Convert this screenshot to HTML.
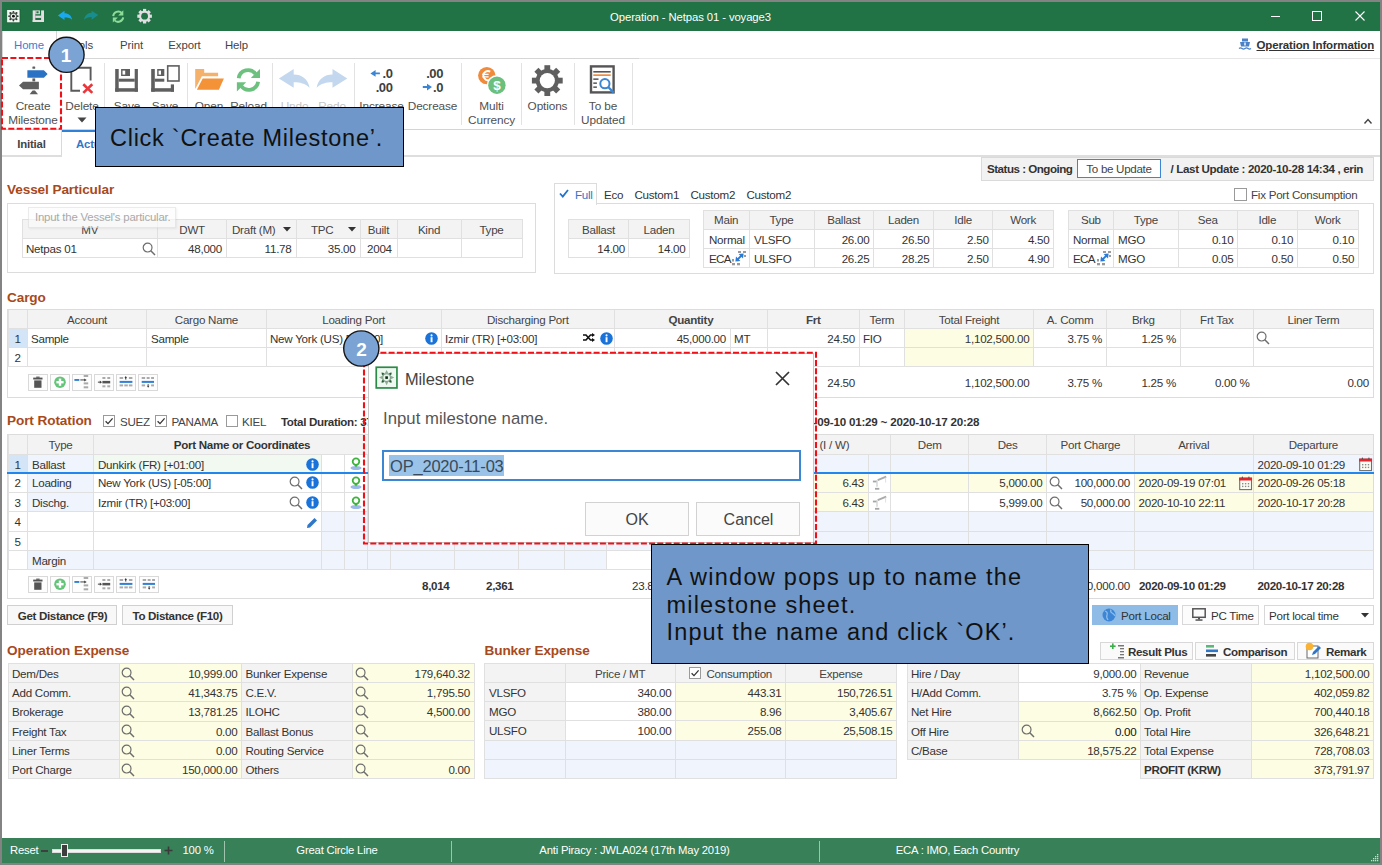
<!DOCTYPE html>
<html><head><meta charset="utf-8"><title>Operation - Netpas 01 - voyage3</title>
<style>
html,body{margin:0;padding:0;}
body{width:1382px;height:865px;position:relative;overflow:hidden;background:#fff;font-family:"Liberation Sans",sans-serif;}
.a{position:absolute;}
.t{position:absolute;white-space:pre;}
svg.a{overflow:visible;}
</style></head><body>

<div class="a" style="left:0px;top:0px;width:1382px;height:865px;background:#838383;"></div>
<div class="a" style="left:2px;top:2px;width:1378px;height:861px;background:#ffffff;"></div>
<div class="a" style="left:2px;top:2px;width:1378px;height:29px;background:#217346;"></div>
<div class="t" style="left:390.5px;top:9.58px;width:600px;font-size:11.3px;line-height:15px;color:#ffffff;text-align:center;letter-spacing:-0.1px;">Operation - Netpas 01 - voyage3</div>
<svg class="a" style="left:6px;top:9px;" width="15" height="15" viewBox="0 0 15 15"><rect x="0.7" y="0.5" width="13.3" height="13.3" fill="#f2f6f3" stroke="#1b5e36" stroke-width="0.8"/><g transform="translate(7.4 7.2)"><circle r="3.2" fill="none" stroke="#5a6a60" stroke-width="1.3"/><circle r="1.4" fill="#111"/><g fill="#2f3f35"><circle cx="0" cy="-4.3" r="0.9"/><circle cx="0" cy="4.3" r="0.9"/><circle cx="-4.3" cy="0" r="0.9"/><circle cx="4.3" cy="0" r="0.9"/><circle cx="3.1" cy="3.1" r="1"/><circle cx="-3.1" cy="3.1" r="1"/><circle cx="3.1" cy="-3.1" r="1"/><circle cx="-3.1" cy="-3.1" r="1"/></g></g></svg>
<svg class="a" style="left:32px;top:10px;" width="13" height="13" viewBox="0 0 13 13"><g fill="#e6dde2"><rect x="0.7" y="0.4" width="2.6" height="11.6"/><rect x="9.1" y="0.4" width="2.9" height="11.6"/><rect x="0.7" y="10" width="11.3" height="2"/><rect x="3.3" y="5.6" width="5.8" height="2.3"/><rect x="3.3" y="0.4" width="4.6" height="3.8"/></g><rect x="4.4" y="1.3" width="2.2" height="2" fill="#217346"/></svg>
<svg class="a" style="left:57px;top:10px;" width="16" height="11" viewBox="0 0 16 11"><path d="M0.9 5.6 L7.5 0.7 L7.5 3.3 C11.5 3.3 14.5 5.6 15.1 9.7 C13 8 11 7.6 7.5 7.6 L7.5 9.9 Z" fill="#1ba8ec"/></svg>
<svg class="a" style="left:83px;top:10px;" width="16" height="11" viewBox="0 0 16 11"><path d="M15.3 5 L8.6 0.7 L8.6 2.7 C4.6 2.7 1.6 5.6 1.1 9.7 C3.2 8 5.2 7 8.6 7 L8.6 9.7 Z" fill="#178d8e"/></svg>
<svg class="a" style="left:111px;top:9px;" width="15" height="15" viewBox="0 0 15 15"><g transform="translate(7.2 7.5)"><path d="M-5 -0.3 A5.1 5.1 0 0 1 3.6 -3.6" fill="none" stroke="#8ddb98" stroke-width="2"/><path d="M5.1 -6.3 L5.1 -0.9 L0 -0.9 Z" fill="#8ddb98"/><path d="M5 0.9 A5.1 5.1 0 0 1 -3.6 3.9" fill="none" stroke="#8ddb98" stroke-width="2"/><path d="M-5.4 0.9 L-0.3 0.9 L-5.4 5.9 Z" fill="#8ddb98"/></g></svg>
<svg class="a" style="left:136px;top:8px;" width="17" height="17" viewBox="0 0 17 17"><g transform="translate(8.6 8.2)"><circle r="5.6" fill="#e2dee2"/><g fill="#e2dee2"><rect x="-1.6" y="-7.3" width="3.2" height="14.6"/><rect x="-1.6" y="-7.3" width="3.2" height="14.6" transform="rotate(45)"/><rect x="-1.6" y="-7.3" width="3.2" height="14.6" transform="rotate(90)"/><rect x="-1.6" y="-7.3" width="3.2" height="14.6" transform="rotate(135)"/></g><circle r="3.4" fill="#217346"/></g></svg>
<div class="a" style="left:1271px;top:16px;width:9px;height:1px;background:#ffffff;"></div>
<div class="a" style="left:1312px;top:11px;width:10px;height:10px;border:1px solid #ffffff;box-sizing:border-box;"></div>
<svg class="a" style="left:1355px;top:11px;" width="10" height="10" viewBox="0 0 10 10"><path d="M0.5 0.5 L9.5 9.5 M9.5 0.5 L0.5 9.5" stroke="#fff" stroke-width="1.1"/></svg>
<div class="a" style="left:2px;top:31px;width:1px;height:27px;background:#d6d6d6;"></div>
<div class="a" style="left:56px;top:31px;width:1px;height:27px;background:#d6d6d6;"></div>
<div class="a" style="left:56px;top:58px;width:583px;height:1px;background:#d6d6d6;"></div>
<div class="a" style="left:639px;top:58px;width:741px;height:1px;background:#e6e6e6;"></div>
<div class="t" style="left:-271.0px;top:38.05px;width:600px;font-size:11.4px;line-height:15px;color:#3b7ed0;text-align:center;letter-spacing:-0.1px;">Home</div>
<div class="t" style="left:-220.0px;top:38.05px;width:600px;font-size:11.4px;line-height:15px;color:#444;text-align:center;letter-spacing:-0.1px;">Tools</div>
<div class="t" style="left:-168.5px;top:38.05px;width:600px;font-size:11.4px;line-height:15px;color:#444;text-align:center;letter-spacing:-0.1px;">Print</div>
<div class="t" style="left:-115.5px;top:38.05px;width:600px;font-size:11.4px;line-height:15px;color:#444;text-align:center;letter-spacing:-0.1px;">Export</div>
<div class="t" style="left:-63.5px;top:38.05px;width:600px;font-size:11.4px;line-height:15px;color:#444;text-align:center;letter-spacing:-0.1px;">Help</div>
<svg class="a" style="left:1239px;top:38px;" width="12" height="13" viewBox="0 0 12 13"><rect x="3" y="0.5" width="6" height="3" fill="#4a82c8"/><path d="M1 4 H11 L10 8.5 H2 Z" fill="#4a82c8"/><rect x="5.3" y="4.5" width="1.4" height="3" fill="#fff"/><path d="M0 10.5 Q1.5 9.2 3 10.5 T6 10.5 T9 10.5 T12 10.5" fill="none" stroke="#4a82c8" stroke-width="1.2"/></svg>
<div class="t" style="left:1256.5px;top:38.02px;width:600px;font-size:11.5px;line-height:15px;color:#333;text-align:left;font-weight:bold;letter-spacing:-0.15px;text-decoration:underline;">Operation Information</div>
<div class="a" style="left:2px;top:129px;width:1378px;height:1px;background:#d4d4d4;"></div>
<div class="a" style="left:104px;top:63px;width:1px;height:62px;background:#e2e2e2;"></div>
<div class="a" style="left:187px;top:63px;width:1px;height:62px;background:#e2e2e2;"></div>
<div class="a" style="left:272px;top:63px;width:1px;height:62px;background:#e2e2e2;"></div>
<div class="a" style="left:354px;top:63px;width:1px;height:62px;background:#e2e2e2;"></div>
<div class="a" style="left:461px;top:63px;width:1px;height:62px;background:#e2e2e2;"></div>
<div class="a" style="left:521px;top:63px;width:1px;height:62px;background:#e2e2e2;"></div>
<div class="a" style="left:574px;top:63px;width:1px;height:62px;background:#e2e2e2;"></div>
<div class="a" style="left:632px;top:63px;width:1px;height:62px;background:#e2e2e2;"></div>
<div class="t" style="left:-267.0px;top:98.91px;width:600px;font-size:11.8px;line-height:15px;color:#505050;text-align:center;letter-spacing:-0.12px;">Create</div>
<div class="t" style="left:-267.0px;top:112.91px;width:600px;font-size:11.8px;line-height:15px;color:#505050;text-align:center;letter-spacing:-0.12px;">Milestone</div>
<div class="t" style="left:-218.0px;top:98.91px;width:600px;font-size:11.8px;line-height:15px;color:#505050;text-align:center;letter-spacing:-0.12px;">Delete</div>
<svg class="a" style="left:77px;top:117px;" width="10" height="6" viewBox="0 0 10 6"><path d="M0.5 0.5 L9.5 0.5 L5 5.5 Z" fill="#444"/></svg>
<div class="t" style="left:-173.0px;top:98.91px;width:600px;font-size:11.8px;line-height:15px;color:#505050;text-align:center;letter-spacing:-0.12px;">Save</div>
<div class="t" style="left:-135.0px;top:98.91px;width:600px;font-size:11.8px;line-height:15px;color:#505050;text-align:center;letter-spacing:-0.12px;">Save</div>
<div class="t" style="left:-91.0px;top:98.91px;width:600px;font-size:11.8px;line-height:15px;color:#505050;text-align:center;letter-spacing:-0.12px;">Open</div>
<div class="t" style="left:-51.5px;top:98.91px;width:600px;font-size:11.8px;line-height:15px;color:#505050;text-align:center;letter-spacing:-0.12px;">Reload</div>
<div class="t" style="left:-5.5px;top:98.91px;width:600px;font-size:11.8px;line-height:15px;color:#c5c5c5;text-align:center;letter-spacing:-0.12px;">Undo</div>
<div class="t" style="left:32.0px;top:98.91px;width:600px;font-size:11.8px;line-height:15px;color:#c5c5c5;text-align:center;letter-spacing:-0.12px;">Redo</div>
<div class="t" style="left:81.5px;top:98.91px;width:600px;font-size:11.8px;line-height:15px;color:#505050;text-align:center;letter-spacing:-0.12px;">Increase</div>
<div class="t" style="left:132.5px;top:98.91px;width:600px;font-size:11.8px;line-height:15px;color:#505050;text-align:center;letter-spacing:-0.12px;">Decrease</div>
<div class="t" style="left:191.5px;top:98.91px;width:600px;font-size:11.8px;line-height:15px;color:#505050;text-align:center;letter-spacing:-0.12px;">Multi</div>
<div class="t" style="left:191.5px;top:112.91px;width:600px;font-size:11.8px;line-height:15px;color:#505050;text-align:center;letter-spacing:-0.12px;">Currency</div>
<div class="t" style="left:247.5px;top:98.91px;width:600px;font-size:11.8px;line-height:15px;color:#505050;text-align:center;letter-spacing:-0.12px;">Options</div>
<div class="t" style="left:303.0px;top:98.91px;width:600px;font-size:11.8px;line-height:15px;color:#505050;text-align:center;letter-spacing:-0.12px;">To be</div>
<div class="t" style="left:303.0px;top:112.91px;width:600px;font-size:11.8px;line-height:15px;color:#505050;text-align:center;letter-spacing:-0.12px;">Updated</div>
<svg class="a" style="left:14px;top:60px;" width="40" height="40" viewBox="0 0 40 40"><g fill="#5f5f5f"><rect x="18.4" y="6.5" width="2.8" height="2.3" rx="0.6"/><rect x="18.4" y="18.4" width="2.8" height="3" /><path d="M18.6 30.5 H21 L24 34.2 H15.6 Z"/><path d="M5 25.5 L9 21.8 H24.9 V29.2 H9 Z"/></g><path d="M13.4 10.3 H29.9 L33.6 14 L29.9 17.7 H13.4 Z" fill="#2a72c4"/></svg>
<svg class="a" style="left:66px;top:62px;" width="32" height="34" viewBox="0 0 32 34"><path d="M5.3 5.8 H24.6 V18.5" fill="none" stroke="#5a5a5a" stroke-width="1.9"/><path d="M5.3 5.2 V28.8 H14" fill="none" stroke="#5a5a5a" stroke-width="1.9"/><path d="M17.3 22.2 L26.3 30.9 M26.3 22.2 L17.3 30.9" stroke="#e8383d" stroke-width="2.7"/></svg>
<svg class="a" style="left:110px;top:60px;" width="75" height="37" viewBox="0 0 75 37"><g fill="#5f5f5f"><rect x="5.2" y="9" width="3.5" height="22.7"/><rect x="24.7" y="9" width="3.2" height="22.7"/><rect x="5.2" y="28.2" width="22.7" height="3.5"/><rect x="8.7" y="18.7" width="16" height="3"/><rect x="11.1" y="9" width="8.9" height="7"/><rect x="41.2" y="9" width="3.6" height="22.7"/><rect x="41.2" y="28.2" width="22.8" height="3.5"/><rect x="60.8" y="24.4" width="3.2" height="7.3"/><rect x="44.8" y="18.7" width="9.5" height="3"/><rect x="47.2" y="9" width="7.1" height="7"/></g><rect x="12.5" y="10.6" width="2.7" height="4" fill="#fff"/><rect x="48.6" y="10.6" width="2.4" height="4" fill="#fff"/><rect x="57.7" y="5.9" width="11.3" height="15.1" fill="none" stroke="#5f5f5f" stroke-width="1.6"/></svg>
<svg class="a" style="left:190px;top:62px;" width="80" height="34" viewBox="0 0 80 34"><path d="M5.2 6.9 H14.2 V10.7 H28.1 V14.2 H11.9 L5.5 26.6 H5.2 Z" fill="#f5b06a"/><path d="M12.7 16.5 H33.9 L28.9 27.8 H6.9 Z" fill="#f39236"/><g fill="none" stroke="#6cc17f" stroke-width="3.8"><path d="M48.7 16.3 A9.4 9.4 0 0 1 65.6 12"/><path d="M68.1 19.8 A9.4 9.4 0 0 1 51.2 24"/></g><g fill="#6cc17f"><path d="M70 6.9 L70 15.9 L60.8 15.9 Z"/><path d="M46.9 20.3 L56.2 20.3 L46.9 29.5 Z"/></g></svg>
<svg class="a" style="left:272px;top:62px;" width="80" height="34" viewBox="0 0 80 34"><g fill="#c3d8ee"><path d="M6.9 16.5 L21.7 6.9 L21.7 12.4 C30 12.4 36 17 37.6 25.8 C33 21.5 28 20.3 21.7 20.3 L21.7 25.8 Z"/><path d="M75.3 16.5 L60.5 6.9 L60.5 12.4 C52.2 12.4 46.2 17 44.6 25.8 C49.2 21.5 54.2 20.3 60.5 20.3 L60.5 25.8 Z"/></g></svg>
<svg class="a" style="left:360px;top:62px;" width="90" height="36" viewBox="0 0 90 36"><g fill="#3a86d4"><path d="M10.4 11.4 L15.6 8.1 L15.6 10.5 H19.9 V12.3 H15.6 L15.6 14.8 Z"/><path d="M72 25 L67 21.8 L67 24.1 H62.8 V25.9 H67 L67 28.4 Z"/></g></svg>
<div class="t" style="left:-207.5px;top:65.30px;width:600px;font-size:13px;line-height:17px;color:#404040;text-align:right;font-weight:bold;letter-spacing:-0.4px;">.0</div>
<div class="t" style="left:-207.5px;top:79.00px;width:600px;font-size:13px;line-height:17px;color:#404040;text-align:right;font-weight:bold;letter-spacing:-0.4px;">.00</div>
<div class="t" style="left:-157.0px;top:65.30px;width:600px;font-size:13px;line-height:17px;color:#404040;text-align:right;font-weight:bold;letter-spacing:-0.4px;">.00</div>
<div class="t" style="left:-157.0px;top:79.00px;width:600px;font-size:13px;line-height:17px;color:#404040;text-align:right;font-weight:bold;letter-spacing:-0.4px;">.0</div>
<svg class="a" style="left:470px;top:60px;" width="160" height="40" viewBox="0 0 160 40"><circle cx="16.8" cy="15.6" r="8.7" fill="#f08b3c"/><path d="M20.2 11.6 A4.6 4.6 0 1 0 20.2 19.6" fill="none" stroke="#fff" stroke-width="1.9"/><path d="M12.3 14.4 H18.6 M12.3 16.8 H18.6" stroke="#fff" stroke-width="1.3"/><circle cx="26.9" cy="25.2" r="10.2" fill="#fff"/><circle cx="26.9" cy="25.2" r="8.7" fill="#6cc07f"/><text x="26.9" y="30.2" font-family="Liberation Sans" font-size="13.5" font-weight="bold" fill="#fff" text-anchor="middle">$</text><g transform="translate(77.3 20.6)"><circle r="11.6" fill="#5f5f5f"/><g fill="#5f5f5f"><rect x="-2.9" y="-15.4" width="5.8" height="30.8"/><rect x="-2.9" y="-15.4" width="5.8" height="30.8" transform="rotate(45)"/><rect x="-2.9" y="-15.4" width="5.8" height="30.8" transform="rotate(90)"/><rect x="-2.9" y="-15.4" width="5.8" height="30.8" transform="rotate(135)"/></g><circle r="7.6" fill="#fff"/></g><rect x="121" y="6.4" width="22.6" height="26" fill="#fff" stroke="#555" stroke-width="2.4"/><rect x="123.3" y="11" width="17.4" height="1.6" fill="#555"/><rect x="123.3" y="14.3" width="17.4" height="1.7" fill="#f08b3c"/><g fill="#555"><rect x="123.3" y="18.4" width="5.2" height="1.5"/><rect x="123.3" y="22.4" width="3.6" height="1.5"/><rect x="123.3" y="26.4" width="3.6" height="1.5"/></g><circle cx="134.9" cy="23.7" r="5.4" fill="#fff"/><circle cx="134.9" cy="23.7" r="4.6" fill="none" stroke="#3c87d4" stroke-width="2"/><path d="M138.2 27 L143.6 32.6" stroke="#3c87d4" stroke-width="2.3"/></svg>
<svg class="a" style="left:1364px;top:118px;" width="8" height="6" viewBox="0 0 8 6"><path d="M0.5 5.5 L4 1.5 L7.5 5.5" fill="none" stroke="#444" stroke-width="1.4"/></svg>
<div class="a" style="left:2px;top:130px;width:60px;height:26px;background:#ffffff;"></div>
<div class="a" style="left:61px;top:130px;width:1px;height:26px;background:#d9d9d9;"></div>
<div class="a" style="left:2px;top:155px;width:60px;height:1px;background:#d9d9d9;"></div>
<div class="t" style="left:-268.5px;top:136.55px;width:600px;font-size:11.4px;line-height:15px;color:#444;text-align:center;font-weight:bold;letter-spacing:-0.2px;">Initial</div>
<div class="a" style="left:62px;top:130px;width:78px;height:2px;background:#2f80d8;"></div>
<div class="t" style="left:76.0px;top:136.55px;width:600px;font-size:11.4px;line-height:15px;color:#2f78c9;text-align:left;font-weight:bold;letter-spacing:-0.2px;">Actual</div>
<div class="a" style="left:140px;top:155px;width:1240px;height:2px;background:#dedede;"></div>
<div class="a" style="left:2px;top:155px;width:60px;height:2px;background:#dedede;"></div>
<div class="a" style="left:981px;top:157px;width:393px;height:24px;background:#f2f2f2;border:1px solid #dadada;box-sizing:border-box;"></div>
<div class="t" style="left:987.0px;top:160.98px;width:600px;font-size:11.6px;line-height:15px;color:#333;text-align:left;font-weight:bold;letter-spacing:-0.5px;">Status : Ongoing</div>
<div class="a" style="left:1077px;top:159px;width:84px;height:19px;background:#ffffff;border:1px solid #3d86d6;box-sizing:border-box;"></div>
<div class="t" style="left:819.0px;top:160.98px;width:600px;font-size:11.6px;line-height:15px;color:#444;text-align:center;letter-spacing:-0.3px;">To be Update</div>
<div class="t" style="left:1170.5px;top:160.98px;width:600px;font-size:11.6px;line-height:15px;color:#333;text-align:left;font-weight:bold;letter-spacing:-0.35px;">/ Last Update : 2020-10-28 14:34 , erin</div>
<div class="t" style="left:7.0px;top:181.29px;width:600px;font-size:13.6px;line-height:18px;color:#a8491b;text-align:left;font-weight:bold;letter-spacing:-0.1px;">Vessel Particular</div>
<div class="a" style="left:7px;top:203px;width:529px;height:70px;border:1px solid #dcdcdc;box-sizing:border-box;"></div>
<div class="a" style="left:22px;top:219px;width:500px;height:19px;background:#f3f3f3;"></div>
<div class="a" style="left:22px;top:219px;width:501px;height:1px;background:#e0e0e0;"></div>
<div class="a" style="left:22px;top:238px;width:501px;height:1px;background:#e0e0e0;"></div>
<div class="a" style="left:22px;top:257px;width:501px;height:1px;background:#e0e0e0;"></div>
<div class="a" style="left:22px;top:219px;width:1px;height:39px;background:#e0e0e0;"></div>
<div class="a" style="left:157px;top:219px;width:1px;height:39px;background:#e0e0e0;"></div>
<div class="a" style="left:226px;top:219px;width:1px;height:39px;background:#e0e0e0;"></div>
<div class="a" style="left:296px;top:219px;width:1px;height:39px;background:#e0e0e0;"></div>
<div class="a" style="left:360px;top:219px;width:1px;height:39px;background:#e0e0e0;"></div>
<div class="a" style="left:397px;top:219px;width:1px;height:39px;background:#e0e0e0;"></div>
<div class="a" style="left:461px;top:219px;width:1px;height:39px;background:#e0e0e0;"></div>
<div class="a" style="left:522px;top:219px;width:1px;height:39px;background:#e0e0e0;"></div>
<div class="t" style="left:-210.2px;top:221.78px;width:600px;font-size:11.6px;line-height:15px;color:#444;text-align:center;letter-spacing:-0.25px;">MV</div>
<div class="t" style="left:-107.9px;top:221.78px;width:600px;font-size:11.6px;line-height:15px;color:#444;text-align:center;letter-spacing:-0.25px;">DWT</div>
<div class="t" style="left:78.5px;top:221.78px;width:600px;font-size:11.6px;line-height:15px;color:#444;text-align:center;letter-spacing:-0.25px;">Built</div>
<div class="t" style="left:129.0px;top:221.78px;width:600px;font-size:11.6px;line-height:15px;color:#444;text-align:center;letter-spacing:-0.25px;">Kind</div>
<div class="t" style="left:191.5px;top:221.78px;width:600px;font-size:11.6px;line-height:15px;color:#444;text-align:center;letter-spacing:-0.25px;">Type</div>
<div class="t" style="left:232.0px;top:221.78px;width:600px;font-size:11.6px;line-height:15px;color:#444;text-align:left;letter-spacing:-0.25px;">Draft (M)</div>
<svg class="a" style="left:283px;top:227px;" width="8" height="5" viewBox="0 0 8 5"><path d="M0 0 H8 L4 4.5 Z" fill="#333"/></svg>
<div class="t" style="left:311.0px;top:221.78px;width:600px;font-size:11.6px;line-height:15px;color:#444;text-align:left;letter-spacing:-0.25px;">TPC</div>
<svg class="a" style="left:348px;top:227px;" width="8" height="5" viewBox="0 0 8 5"><path d="M0 0 H8 L4 4.5 Z" fill="#333"/></svg>
<div class="t" style="left:26.0px;top:240.78px;width:600px;font-size:11.6px;line-height:15px;color:#333;text-align:left;letter-spacing:-0.25px;">Netpas 01</div>
<svg class="a" style="left:142px;top:242px;" width="14" height="14" viewBox="0 0 14 14"><circle cx="5.6" cy="5.6" r="4.4" fill="none" stroke="#6d6d6d" stroke-width="1.2"/><line x1="8.8" y1="8.8" x2="13" y2="13" stroke="#6d6d6d" stroke-width="1.5"/></svg>
<div class="t" style="left:-378.0px;top:240.78px;width:600px;font-size:11.6px;line-height:15px;color:#333;text-align:right;letter-spacing:-0.25px;">48,000</div>
<div class="t" style="left:-308.5px;top:240.78px;width:600px;font-size:11.6px;line-height:15px;color:#333;text-align:right;letter-spacing:-0.25px;">11.78</div>
<div class="t" style="left:-244.5px;top:240.78px;width:600px;font-size:11.6px;line-height:15px;color:#333;text-align:right;letter-spacing:-0.25px;">35.00</div>
<div class="t" style="left:367.0px;top:240.78px;width:600px;font-size:11.6px;line-height:15px;color:#333;text-align:left;letter-spacing:-0.25px;">2004</div>
<div class="a" style="left:28px;top:207px;width:148px;height:21px;background:rgba(252,252,252,0.6);border:1px solid rgba(0,0,0,0.07);box-sizing:border-box;box-shadow:1px 1px 2px rgba(0,0,0,0.06);"></div>
<div class="t" style="left:35.0px;top:209.55px;width:600px;font-size:11.4px;line-height:15px;color:#a9a9a9;text-align:left;letter-spacing:-0.2px;">Input the Vessel&#x27;s particular.</div>
<div class="a" style="left:554px;top:203px;width:820px;height:71px;border:1px solid #dcdcdc;box-sizing:border-box;"></div>
<div class="a" style="left:554px;top:183px;width:43px;height:22px;background:#fff;border:1px solid #dcdcdc;border-bottom:none;box-sizing:border-box;"></div>
<svg class="a" style="left:559px;top:189px;" width="10" height="9" viewBox="0 0 10 9"><path d="M1 4.5 L3.8 7.5 L9 1" fill="none" stroke="#1f72d0" stroke-width="1.8"/></svg>
<div class="t" style="left:575.0px;top:186.98px;width:600px;font-size:11.6px;line-height:15px;color:#2f78c9;text-align:left;letter-spacing:-0.25px;">Full</div>
<div class="t" style="left:604.0px;top:186.98px;width:600px;font-size:11.6px;line-height:15px;color:#333;text-align:left;letter-spacing:-0.25px;">Eco</div>
<div class="t" style="left:634.5px;top:186.98px;width:600px;font-size:11.6px;line-height:15px;color:#333;text-align:left;letter-spacing:-0.25px;">Custom1</div>
<div class="t" style="left:690.5px;top:186.98px;width:600px;font-size:11.6px;line-height:15px;color:#333;text-align:left;letter-spacing:-0.25px;">Custom2</div>
<div class="t" style="left:746.5px;top:186.98px;width:600px;font-size:11.6px;line-height:15px;color:#333;text-align:left;letter-spacing:-0.25px;">Custom2</div>
<svg class="a" style="left:1234px;top:188px;" width="13" height="13" viewBox="0 0 13 13"><rect x="0.5" y="0.5" width="12" height="12" fill="#fff" stroke="#9a9a9a"/></svg>
<div class="t" style="left:1251.0px;top:186.68px;width:600px;font-size:11.6px;line-height:15px;color:#444;text-align:left;letter-spacing:-0.25px;">Fix Port Consumption</div>
<div class="a" style="left:568px;top:219px;width:121px;height:19px;background:#f3f3f3;"></div>
<div class="a" style="left:568px;top:219px;width:122px;height:1px;background:#e0e0e0;"></div>
<div class="a" style="left:568px;top:238px;width:122px;height:1px;background:#e0e0e0;"></div>
<div class="a" style="left:568px;top:257px;width:122px;height:1px;background:#e0e0e0;"></div>
<div class="a" style="left:568px;top:219px;width:1px;height:39px;background:#e0e0e0;"></div>
<div class="a" style="left:628px;top:219px;width:1px;height:39px;background:#e0e0e0;"></div>
<div class="a" style="left:689px;top:219px;width:1px;height:39px;background:#e0e0e0;"></div>
<div class="t" style="left:298.5px;top:221.98px;width:600px;font-size:11.6px;line-height:15px;color:#444;text-align:center;letter-spacing:-0.25px;">Ballast</div>
<div class="t" style="left:359.0px;top:221.98px;width:600px;font-size:11.6px;line-height:15px;color:#444;text-align:center;letter-spacing:-0.25px;">Laden</div>
<div class="t" style="left:25.0px;top:240.98px;width:600px;font-size:11.6px;line-height:15px;color:#333;text-align:right;letter-spacing:-0.25px;">14.00</div>
<div class="t" style="left:85.5px;top:240.98px;width:600px;font-size:11.6px;line-height:15px;color:#333;text-align:right;letter-spacing:-0.25px;">14.00</div>
<div class="a" style="left:703px;top:210px;width:350px;height:19px;background:#f3f3f3;"></div>
<div class="a" style="left:703px;top:210px;width:351px;height:1px;background:#e0e0e0;"></div>
<div class="a" style="left:703px;top:229px;width:351px;height:1px;background:#e0e0e0;"></div>
<div class="a" style="left:703px;top:248px;width:351px;height:1px;background:#e0e0e0;"></div>
<div class="a" style="left:703px;top:267px;width:351px;height:1px;background:#e0e0e0;"></div>
<div class="a" style="left:703px;top:210px;width:1px;height:58px;background:#e0e0e0;"></div>
<div class="a" style="left:749px;top:210px;width:1px;height:58px;background:#e0e0e0;"></div>
<div class="a" style="left:814px;top:210px;width:1px;height:58px;background:#e0e0e0;"></div>
<div class="a" style="left:873px;top:210px;width:1px;height:58px;background:#e0e0e0;"></div>
<div class="a" style="left:933px;top:210px;width:1px;height:58px;background:#e0e0e0;"></div>
<div class="a" style="left:992px;top:210px;width:1px;height:58px;background:#e0e0e0;"></div>
<div class="a" style="left:1053px;top:210px;width:1px;height:58px;background:#e0e0e0;"></div>
<div class="t" style="left:426.2px;top:212.48px;width:600px;font-size:11.6px;line-height:15px;color:#444;text-align:center;letter-spacing:-0.25px;">Main</div>
<div class="t" style="left:481.5px;top:212.48px;width:600px;font-size:11.6px;line-height:15px;color:#444;text-align:center;letter-spacing:-0.25px;">Type</div>
<div class="t" style="left:543.7px;top:212.48px;width:600px;font-size:11.6px;line-height:15px;color:#444;text-align:center;letter-spacing:-0.25px;">Ballast</div>
<div class="t" style="left:603.5px;top:212.48px;width:600px;font-size:11.6px;line-height:15px;color:#444;text-align:center;letter-spacing:-0.25px;">Laden</div>
<div class="t" style="left:663.1px;top:212.48px;width:600px;font-size:11.6px;line-height:15px;color:#444;text-align:center;letter-spacing:-0.25px;">Idle</div>
<div class="t" style="left:723.1px;top:212.48px;width:600px;font-size:11.6px;line-height:15px;color:#444;text-align:center;letter-spacing:-0.25px;">Work</div>
<div class="t" style="left:709.0px;top:231.88px;width:600px;font-size:11.6px;line-height:15px;color:#333;text-align:left;letter-spacing:-0.25px;">Normal</div>
<div class="t" style="left:754.0px;top:231.88px;width:600px;font-size:11.6px;line-height:15px;color:#333;text-align:left;letter-spacing:-0.25px;">VLSFO</div>
<div class="t" style="left:269.4px;top:231.88px;width:600px;font-size:11.6px;line-height:15px;color:#333;text-align:right;letter-spacing:-0.25px;">26.00</div>
<div class="t" style="left:329.5px;top:231.88px;width:600px;font-size:11.6px;line-height:15px;color:#333;text-align:right;letter-spacing:-0.25px;">26.50</div>
<div class="t" style="left:388.7px;top:231.88px;width:600px;font-size:11.6px;line-height:15px;color:#333;text-align:right;letter-spacing:-0.25px;">2.50</div>
<div class="t" style="left:449.5px;top:231.88px;width:600px;font-size:11.6px;line-height:15px;color:#333;text-align:right;letter-spacing:-0.25px;">4.50</div>
<div class="t" style="left:709.0px;top:250.88px;width:600px;font-size:11.6px;line-height:15px;color:#333;text-align:left;letter-spacing:-0.7px;">ECA</div>
<div class="t" style="left:754.0px;top:250.88px;width:600px;font-size:11.6px;line-height:15px;color:#333;text-align:left;letter-spacing:-0.25px;">ULSFO</div>
<div class="t" style="left:269.4px;top:250.88px;width:600px;font-size:11.6px;line-height:15px;color:#333;text-align:right;letter-spacing:-0.25px;">26.25</div>
<div class="t" style="left:329.5px;top:250.88px;width:600px;font-size:11.6px;line-height:15px;color:#333;text-align:right;letter-spacing:-0.25px;">28.25</div>
<div class="t" style="left:388.7px;top:250.88px;width:600px;font-size:11.6px;line-height:15px;color:#333;text-align:right;letter-spacing:-0.25px;">2.50</div>
<div class="t" style="left:449.5px;top:250.88px;width:600px;font-size:11.6px;line-height:15px;color:#333;text-align:right;letter-spacing:-0.25px;">4.90</div>
<svg class="a" style="left:731px;top:250px;" width="16" height="16" viewBox="0 0 16 16"><g fill="#9a9a9a"><rect x="7" y="1" width="3" height="2"/><rect x="12" y="1" width="3" height="2"/><rect x="13" y="5" width="2" height="2"/><rect x="1" y="9" width="2" height="2.5"/><rect x="1" y="13" width="3" height="2.3"/><rect x="6" y="13" width="3" height="2.3"/></g><path d="M5.5 10.5 L11.5 4.5" stroke="#2a7ad6" stroke-width="1.8"/><path d="M12.6 3.4 L7.6 4 L12 8.4 Z" fill="#2a7ad6"/><path d="M4.4 11.6 L9.4 11 L5 6.6 Z" fill="#2a7ad6"/></svg>
<div class="a" style="left:1068px;top:210px;width:290px;height:19px;background:#f3f3f3;"></div>
<div class="a" style="left:1068px;top:210px;width:291px;height:1px;background:#e0e0e0;"></div>
<div class="a" style="left:1068px;top:229px;width:291px;height:1px;background:#e0e0e0;"></div>
<div class="a" style="left:1068px;top:248px;width:291px;height:1px;background:#e0e0e0;"></div>
<div class="a" style="left:1068px;top:267px;width:291px;height:1px;background:#e0e0e0;"></div>
<div class="a" style="left:1068px;top:210px;width:1px;height:58px;background:#e0e0e0;"></div>
<div class="a" style="left:1113px;top:210px;width:1px;height:58px;background:#e0e0e0;"></div>
<div class="a" style="left:1178px;top:210px;width:1px;height:58px;background:#e0e0e0;"></div>
<div class="a" style="left:1237px;top:210px;width:1px;height:58px;background:#e0e0e0;"></div>
<div class="a" style="left:1297px;top:210px;width:1px;height:58px;background:#e0e0e0;"></div>
<div class="a" style="left:1358px;top:210px;width:1px;height:58px;background:#e0e0e0;"></div>
<div class="t" style="left:790.9px;top:212.48px;width:600px;font-size:11.6px;line-height:15px;color:#444;text-align:center;letter-spacing:-0.25px;">Sub</div>
<div class="t" style="left:845.8px;top:212.48px;width:600px;font-size:11.6px;line-height:15px;color:#444;text-align:center;letter-spacing:-0.25px;">Type</div>
<div class="t" style="left:907.8px;top:212.48px;width:600px;font-size:11.6px;line-height:15px;color:#444;text-align:center;letter-spacing:-0.25px;">Sea</div>
<div class="t" style="left:967.3px;top:212.48px;width:600px;font-size:11.6px;line-height:15px;color:#444;text-align:center;letter-spacing:-0.25px;">Idle</div>
<div class="t" style="left:1027.7px;top:212.48px;width:600px;font-size:11.6px;line-height:15px;color:#444;text-align:center;letter-spacing:-0.25px;">Work</div>
<div class="t" style="left:1073.0px;top:231.88px;width:600px;font-size:11.6px;line-height:15px;color:#333;text-align:left;letter-spacing:-0.25px;">Normal</div>
<div class="t" style="left:1118.0px;top:231.88px;width:600px;font-size:11.6px;line-height:15px;color:#333;text-align:left;letter-spacing:-0.25px;">MGO</div>
<div class="t" style="left:633.5px;top:231.88px;width:600px;font-size:11.6px;line-height:15px;color:#333;text-align:right;letter-spacing:-0.25px;">0.10</div>
<div class="t" style="left:693.2px;top:231.88px;width:600px;font-size:11.6px;line-height:15px;color:#333;text-align:right;letter-spacing:-0.25px;">0.10</div>
<div class="t" style="left:754.2px;top:231.88px;width:600px;font-size:11.6px;line-height:15px;color:#333;text-align:right;letter-spacing:-0.25px;">0.10</div>
<div class="t" style="left:1073.0px;top:250.88px;width:600px;font-size:11.6px;line-height:15px;color:#333;text-align:left;letter-spacing:-0.7px;">ECA</div>
<div class="t" style="left:1118.0px;top:250.88px;width:600px;font-size:11.6px;line-height:15px;color:#333;text-align:left;letter-spacing:-0.25px;">MGO</div>
<div class="t" style="left:633.5px;top:250.88px;width:600px;font-size:11.6px;line-height:15px;color:#333;text-align:right;letter-spacing:-0.25px;">0.05</div>
<div class="t" style="left:693.2px;top:250.88px;width:600px;font-size:11.6px;line-height:15px;color:#333;text-align:right;letter-spacing:-0.25px;">0.50</div>
<div class="t" style="left:754.2px;top:250.88px;width:600px;font-size:11.6px;line-height:15px;color:#333;text-align:right;letter-spacing:-0.25px;">0.50</div>
<svg class="a" style="left:1095.5px;top:250px;" width="16" height="16" viewBox="0 0 16 16"><g fill="#9a9a9a"><rect x="7" y="1" width="3" height="2"/><rect x="12" y="1" width="3" height="2"/><rect x="13" y="5" width="2" height="2"/><rect x="1" y="9" width="2" height="2.5"/><rect x="1" y="13" width="3" height="2.3"/><rect x="6" y="13" width="3" height="2.3"/></g><path d="M5.5 10.5 L11.5 4.5" stroke="#2a7ad6" stroke-width="1.8"/><path d="M12.6 3.4 L7.6 4 L12 8.4 Z" fill="#2a7ad6"/><path d="M4.4 11.6 L9.4 11 L5 6.6 Z" fill="#2a7ad6"/></svg>
<div class="t" style="left:7.0px;top:288.79px;width:600px;font-size:13.6px;line-height:18px;color:#a8491b;text-align:left;font-weight:bold;letter-spacing:-0.1px;">Cargo</div>
<div class="a" style="left:8px;top:309px;width:1365px;height:19px;background:#f3f3f3;"></div>
<div class="a" style="left:8px;top:328px;width:19px;height:19px;background:#d3e5f6;"></div>
<div class="a" style="left:904px;top:328px;width:129px;height:38px;background:#fdfde4;"></div>
<div class="a" style="left:8px;top:309px;width:1366px;height:1px;background:#e0e0e0;"></div>
<div class="a" style="left:8px;top:328px;width:1366px;height:1px;background:#e0e0e0;"></div>
<div class="a" style="left:8px;top:347px;width:1366px;height:1px;background:#e0e0e0;"></div>
<div class="a" style="left:8px;top:366px;width:1366px;height:1px;background:#e0e0e0;"></div>
<div class="a" style="left:8px;top:309px;width:1px;height:58px;background:#e0e0e0;"></div>
<div class="a" style="left:27px;top:309px;width:1px;height:58px;background:#e0e0e0;"></div>
<div class="a" style="left:146px;top:309px;width:1px;height:58px;background:#e0e0e0;"></div>
<div class="a" style="left:266px;top:309px;width:1px;height:58px;background:#e0e0e0;"></div>
<div class="a" style="left:441px;top:309px;width:1px;height:58px;background:#e0e0e0;"></div>
<div class="a" style="left:614px;top:309px;width:1px;height:58px;background:#e0e0e0;"></div>
<div class="a" style="left:767px;top:309px;width:1px;height:58px;background:#e0e0e0;"></div>
<div class="a" style="left:859px;top:309px;width:1px;height:58px;background:#e0e0e0;"></div>
<div class="a" style="left:904px;top:309px;width:1px;height:58px;background:#e0e0e0;"></div>
<div class="a" style="left:1033px;top:309px;width:1px;height:58px;background:#e0e0e0;"></div>
<div class="a" style="left:1106px;top:309px;width:1px;height:58px;background:#e0e0e0;"></div>
<div class="a" style="left:1180px;top:309px;width:1px;height:58px;background:#e0e0e0;"></div>
<div class="a" style="left:1253px;top:309px;width:1px;height:58px;background:#e0e0e0;"></div>
<div class="a" style="left:1373px;top:309px;width:1px;height:58px;background:#e0e0e0;"></div>
<div class="a" style="left:730px;top:328px;width:1px;height:39px;background:#e0e0e0;"></div>
<div class="a" style="left:7px;top:309px;width:1367px;height:89px;border:1px solid #dcdcdc;box-sizing:border-box;"></div>
<div class="t" style="left:-213.0px;top:311.78px;width:600px;font-size:11.6px;line-height:15px;color:#444;text-align:center;letter-spacing:-0.25px;">Account</div>
<div class="t" style="left:-93.6px;top:311.78px;width:600px;font-size:11.6px;line-height:15px;color:#444;text-align:center;letter-spacing:-0.25px;">Cargo Name</div>
<div class="t" style="left:53.6px;top:311.78px;width:600px;font-size:11.6px;line-height:15px;color:#444;text-align:center;letter-spacing:-0.25px;">Loading Port</div>
<div class="t" style="left:227.8px;top:311.78px;width:600px;font-size:11.6px;line-height:15px;color:#444;text-align:center;letter-spacing:-0.25px;">Discharging Port</div>
<div class="t" style="left:390.9px;top:311.78px;width:600px;font-size:11.6px;line-height:15px;color:#444;text-align:center;font-weight:bold;letter-spacing:-0.25px;">Quantity</div>
<div class="t" style="left:513.3px;top:311.78px;width:600px;font-size:11.6px;line-height:15px;color:#444;text-align:center;font-weight:bold;letter-spacing:-0.25px;">Frt</div>
<div class="t" style="left:581.9px;top:311.78px;width:600px;font-size:11.6px;line-height:15px;color:#444;text-align:center;letter-spacing:-0.25px;">Term</div>
<div class="t" style="left:669.0px;top:311.78px;width:600px;font-size:11.6px;line-height:15px;color:#444;text-align:center;letter-spacing:-0.25px;">Total Freight</div>
<div class="t" style="left:770.1px;top:311.78px;width:600px;font-size:11.6px;line-height:15px;color:#444;text-align:center;letter-spacing:-0.25px;">A. Comm</div>
<div class="t" style="left:843.3px;top:311.78px;width:600px;font-size:11.6px;line-height:15px;color:#444;text-align:center;letter-spacing:-0.25px;">Brkg</div>
<div class="t" style="left:916.8px;top:311.78px;width:600px;font-size:11.6px;line-height:15px;color:#444;text-align:center;letter-spacing:-0.25px;">Frt Tax</div>
<div class="t" style="left:1013.5px;top:311.78px;width:600px;font-size:11.6px;line-height:15px;color:#444;text-align:center;letter-spacing:-0.25px;">Liner Term</div>
<div class="t" style="left:-282.5px;top:330.98px;width:600px;font-size:11.6px;line-height:15px;color:#333;text-align:center;letter-spacing:-0.25px;">1</div>
<div class="t" style="left:-282.5px;top:350.08px;width:600px;font-size:11.6px;line-height:15px;color:#333;text-align:center;letter-spacing:-0.25px;">2</div>
<div class="t" style="left:31.0px;top:330.98px;width:600px;font-size:11.6px;line-height:15px;color:#333;text-align:left;letter-spacing:-0.25px;">Sample</div>
<div class="t" style="left:151.0px;top:330.98px;width:600px;font-size:11.6px;line-height:15px;color:#333;text-align:left;letter-spacing:-0.25px;">Sample</div>
<div class="t" style="left:270.0px;top:330.98px;width:600px;font-size:11.6px;line-height:15px;color:#333;text-align:left;letter-spacing:-0.25px;">New York (US) [-05:00]</div>
<svg class="a" style="left:425px;top:331.9px;" width="13" height="13" viewBox="0 0 13 13"><circle cx="6.5" cy="6.5" r="6.3" fill="#1a73d9"/><rect x="5.6" y="5.2" width="1.9" height="5" fill="#fff"/><circle cx="6.55" cy="3.4" r="1.05" fill="#fff"/></svg>
<div class="t" style="left:445.0px;top:330.98px;width:600px;font-size:11.6px;line-height:15px;color:#333;text-align:left;letter-spacing:-0.25px;">Izmir (TR) [+03:00]</div>
<svg class="a" style="left:583px;top:333.4px;" width="12" height="9" viewBox="0 0 12 9"><path d="M0 2 H3 L7.5 7 H10" fill="none" stroke="#111" stroke-width="1.6"/><path d="M0 7 H3 L7.5 2 H10" fill="none" stroke="#111" stroke-width="1.6"/><path d="M9 0 L12 2 L9 4 Z M9 5 L12 7 L9 9 Z" fill="#111"/></svg>
<svg class="a" style="left:599.5px;top:331.9px;" width="13" height="13" viewBox="0 0 13 13"><circle cx="6.5" cy="6.5" r="6.3" fill="#1a73d9"/><rect x="5.6" y="5.2" width="1.9" height="5" fill="#fff"/><circle cx="6.55" cy="3.4" r="1.05" fill="#fff"/></svg>
<div class="t" style="left:126.0px;top:330.98px;width:600px;font-size:11.6px;line-height:15px;color:#333;text-align:right;letter-spacing:-0.25px;">45,000.00</div>
<div class="t" style="left:734.0px;top:330.98px;width:600px;font-size:11.6px;line-height:15px;color:#333;text-align:left;letter-spacing:-0.25px;">MT</div>
<div class="t" style="left:255.0px;top:330.98px;width:600px;font-size:11.6px;line-height:15px;color:#333;text-align:right;letter-spacing:-0.25px;">24.50</div>
<div class="t" style="left:863.0px;top:330.98px;width:600px;font-size:11.6px;line-height:15px;color:#333;text-align:left;letter-spacing:-0.25px;">FIO</div>
<div class="t" style="left:429.5px;top:330.98px;width:600px;font-size:11.6px;line-height:15px;color:#333;text-align:right;letter-spacing:-0.25px;">1,102,500.00</div>
<div class="t" style="left:502.0px;top:330.98px;width:600px;font-size:11.6px;line-height:15px;color:#333;text-align:right;letter-spacing:-0.25px;">3.75 %</div>
<div class="t" style="left:576.0px;top:330.98px;width:600px;font-size:11.6px;line-height:15px;color:#333;text-align:right;letter-spacing:-0.25px;">1.25 %</div>
<svg class="a" style="left:1256px;top:331.4px;" width="14" height="14" viewBox="0 0 14 14"><circle cx="5.6" cy="5.6" r="4.4" fill="none" stroke="#6d6d6d" stroke-width="1.2"/><line x1="8.8" y1="8.8" x2="13" y2="13" stroke="#6d6d6d" stroke-width="1.5"/></svg>
<div class="a" style="left:28px;top:374px;width:20px;height:17px;box-sizing:border-box;border:1px solid #d9d9d9;background:#fdfdfd"></div>
<svg class="a" style="left:28px;top:374px;" width="20" height="17" viewBox="0 0 20 17"><g fill="#555"><rect x="6.2" y="6.4" width="7.3" height="7.4"/><rect x="5.2" y="3.6" width="9.3" height="1.9"/><rect x="8.2" y="2.6" width="3.4" height="1.2"/></g></svg>
<div class="a" style="left:50px;top:374px;width:20px;height:17px;box-sizing:border-box;border:1px solid #d9d9d9;background:#fdfdfd"></div>
<svg class="a" style="left:50px;top:374px;" width="20" height="17" viewBox="0 0 20 17"><circle cx="10" cy="8.2" r="5.8" fill="#66c47a"/><rect x="8.8" y="4.6" width="2.4" height="7.2" fill="#fff"/><rect x="6.4" y="7" width="7.2" height="2.4" fill="#fff"/></svg>
<div class="a" style="left:72px;top:374px;width:20px;height:17px;box-sizing:border-box;border:1px solid #d9d9d9;background:#fdfdfd"></div>
<svg class="a" style="left:72px;top:374px;" width="20" height="17" viewBox="0 0 20 17"><rect x="2.4" y="5" width="4.9" height="1.9" fill="#2f80d6"/><path d="M8.3 5.95 H13" stroke="#444" stroke-width="1"/><path d="M12.2 4.4 L14.7 5.95 L12.2 7.5 Z" fill="#444"/><g fill="#aaa"><rect x="11.7" y="1" width="4.5" height="2"/><rect x="11.7" y="8.4" width="4.5" height="2"/><rect x="11.7" y="12.3" width="4.5" height="2"/></g></svg>
<div class="a" style="left:94px;top:374px;width:20px;height:17px;box-sizing:border-box;border:1px solid #d9d9d9;background:#fdfdfd"></div>
<svg class="a" style="left:94px;top:374px;" width="20" height="17" viewBox="0 0 20 17"><path d="M3.9 8.15 H6.5" stroke="#444" stroke-width="1"/><path d="M5.8 6.6 L8 8.15 L5.8 9.7 Z" fill="#444"/><rect x="8.4" y="6.9" width="7.8" height="2.5" fill="#555"/><g fill="#aaa"><rect x="8.4" y="3" width="3" height="2"/><rect x="13.3" y="3" width="2.9" height="2"/><rect x="8.4" y="11.3" width="3" height="2"/><rect x="13.3" y="11.3" width="2.9" height="2"/></g></svg>
<div class="a" style="left:116px;top:374px;width:20px;height:17px;box-sizing:border-box;border:1px solid #d9d9d9;background:#fdfdfd"></div>
<svg class="a" style="left:116px;top:374px;" width="20" height="17" viewBox="0 0 20 17"><rect x="3.6" y="6.9" width="12.8" height="2" fill="#2f80d6"/><g fill="#aaa"><rect x="3.6" y="3" width="3.5" height="2"/><rect x="12.9" y="3" width="3.5" height="2"/><rect x="3.6" y="10.4" width="3.5" height="2"/><rect x="8.3" y="10.4" width="3.5" height="2"/><rect x="12.9" y="10.4" width="3.5" height="2"/></g><path d="M8.5 4 L9.75 2 L11 4 Z M9.2 3.8 H10.3 V5.5 H9.2 Z" fill="#333"/></svg>
<div class="a" style="left:138px;top:374px;width:20px;height:17px;box-sizing:border-box;border:1px solid #d9d9d9;background:#fdfdfd"></div>
<svg class="a" style="left:138px;top:374px;" width="20" height="17" viewBox="0 0 20 17"><rect x="3.7" y="6.9" width="12.3" height="2" fill="#2f80d6"/><g fill="#aaa"><rect x="3.7" y="3" width="3.4" height="2"/><rect x="8.7" y="3" width="2.9" height="2"/><rect x="13.1" y="3" width="2.9" height="2"/><rect x="3.7" y="10.4" width="3.4" height="2"/><rect x="13.1" y="10.4" width="2.9" height="2"/></g><path d="M8.9 11.8 L10.15 13.8 L11.4 11.8 Z M9.6 10.2 H10.7 V12 H9.6 Z" fill="#333"/></svg>
<div class="t" style="left:255.0px;top:374.98px;width:600px;font-size:11.6px;line-height:15px;color:#333;text-align:right;letter-spacing:-0.25px;">24.50</div>
<div class="t" style="left:429.5px;top:374.98px;width:600px;font-size:11.6px;line-height:15px;color:#333;text-align:right;letter-spacing:-0.25px;">1,102,500.00</div>
<div class="t" style="left:502.0px;top:374.98px;width:600px;font-size:11.6px;line-height:15px;color:#333;text-align:right;letter-spacing:-0.25px;">3.75 %</div>
<div class="t" style="left:576.0px;top:374.98px;width:600px;font-size:11.6px;line-height:15px;color:#333;text-align:right;letter-spacing:-0.25px;">1.25 %</div>
<div class="t" style="left:649.5px;top:374.98px;width:600px;font-size:11.6px;line-height:15px;color:#333;text-align:right;letter-spacing:-0.25px;">0.00 %</div>
<div class="t" style="left:769.0px;top:374.98px;width:600px;font-size:11.6px;line-height:15px;color:#333;text-align:right;letter-spacing:-0.25px;">0.00</div>
<div class="t" style="left:7.0px;top:412.29px;width:600px;font-size:13.6px;line-height:18px;color:#a8491b;text-align:left;font-weight:bold;letter-spacing:-0.1px;">Port Rotation</div>
<svg class="a" style="left:103px;top:415px;" width="12" height="12" viewBox="0 0 12 12"><rect x="0.5" y="0.5" width="11" height="11" fill="#fff" stroke="#9a9a9a"/><path d="M2.6 6.2 L5 8.6 L9.6 3.4" fill="none" stroke="#333" stroke-width="1.3"/></svg>
<div class="t" style="left:120.0px;top:414.48px;width:600px;font-size:11.6px;line-height:15px;color:#444;text-align:left;letter-spacing:-0.25px;">SUEZ</div>
<svg class="a" style="left:155px;top:415px;" width="12" height="12" viewBox="0 0 12 12"><rect x="0.5" y="0.5" width="11" height="11" fill="#fff" stroke="#9a9a9a"/><path d="M2.6 6.2 L5 8.6 L9.6 3.4" fill="none" stroke="#333" stroke-width="1.3"/></svg>
<div class="t" style="left:171.5px;top:414.48px;width:600px;font-size:11.6px;line-height:15px;color:#444;text-align:left;letter-spacing:-0.25px;">PANAMA</div>
<svg class="a" style="left:225.5px;top:415px;" width="12" height="12" viewBox="0 0 12 12"><rect x="0.5" y="0.5" width="11" height="11" fill="#fff" stroke="#9a9a9a"/></svg>
<div class="t" style="left:242.0px;top:414.48px;width:600px;font-size:11.6px;line-height:15px;color:#444;text-align:left;letter-spacing:-0.25px;">KIEL</div>
<div class="t" style="left:281.0px;top:414.48px;width:600px;font-size:11.6px;line-height:15px;color:#333;text-align:left;font-weight:bold;letter-spacing:-0.35px;">Total Duration: 37.8 Days</div>
<div class="t" style="left:379.2px;top:414.48px;width:600px;font-size:11.6px;line-height:15px;color:#333;text-align:right;font-weight:bold;letter-spacing:-0.2px;">( 2020-09-10 01:29 ~ 2020-10-17 20:28</div>
<div class="a" style="left:8px;top:434px;width:1365px;height:20px;background:#f3f3f3;"></div>
<div class="a" style="left:8px;top:454px;width:19px;height:18px;background:#d3e5f6;"></div>
<div class="a" style="left:27px;top:454px;width:66px;height:57px;background:#f0f4fc;"></div>
<div class="a" style="left:27px;top:550px;width:1346px;height:19px;background:#f0f4fc;"></div>
<div class="a" style="left:606px;top:550px;width:94px;height:19px;background:#ffffff;"></div>
<div class="a" style="left:93px;top:454px;width:228px;height:18px;background:#f2f9f1;"></div>
<div class="a" style="left:321px;top:454px;width:1052px;height:18px;background:#f0f4fc;"></div>
<div class="a" style="left:321px;top:511px;width:1052px;height:39px;background:#f0f4fc;"></div>
<div class="a" style="left:321px;top:454px;width:0px;height:18px;background:#f0f4fc;"></div>
<div class="a" style="left:790px;top:472px;width:78px;height:39px;background:#fdfde4;"></div>
<div class="a" style="left:890px;top:472px;width:78px;height:20px;background:#fdfde4;"></div>
<div class="a" style="left:968px;top:472px;width:78px;height:20px;background:#fdfde4;"></div>
<div class="a" style="left:1134px;top:472px;width:239px;height:39px;background:#fdfde4;"></div>
<div class="a" style="left:321px;top:454px;width:46px;height:18px;background:#ffffff;"></div>
<div class="a" style="left:367px;top:454px;width:423px;height:18px;background:#f0f4fc;"></div>
<div class="a" style="left:8px;top:434px;width:1366px;height:1px;background:#e0e0e0;"></div>
<div class="a" style="left:8px;top:454px;width:1366px;height:1px;background:#e0e0e0;"></div>
<div class="a" style="left:8px;top:472px;width:1366px;height:1px;background:#e0e0e0;"></div>
<div class="a" style="left:8px;top:492px;width:1366px;height:1px;background:#e0e0e0;"></div>
<div class="a" style="left:8px;top:511px;width:1366px;height:1px;background:#e0e0e0;"></div>
<div class="a" style="left:8px;top:531px;width:1366px;height:1px;background:#e0e0e0;"></div>
<div class="a" style="left:8px;top:550px;width:1366px;height:1px;background:#e0e0e0;"></div>
<div class="a" style="left:8px;top:569px;width:1366px;height:1px;background:#e0e0e0;"></div>
<div class="a" style="left:8px;top:434px;width:1px;height:136px;background:#e0e0e0;"></div>
<div class="a" style="left:27px;top:434px;width:1px;height:136px;background:#e0e0e0;"></div>
<div class="a" style="left:93px;top:434px;width:1px;height:136px;background:#e0e0e0;"></div>
<div class="a" style="left:321px;top:434px;width:1px;height:136px;background:#e0e0e0;"></div>
<div class="a" style="left:344px;top:434px;width:1px;height:136px;background:#e0e0e0;"></div>
<div class="a" style="left:367px;top:434px;width:1px;height:136px;background:#e0e0e0;"></div>
<div class="a" style="left:390px;top:434px;width:1px;height:136px;background:#e0e0e0;"></div>
<div class="a" style="left:454px;top:434px;width:1px;height:136px;background:#e0e0e0;"></div>
<div class="a" style="left:518px;top:434px;width:1px;height:136px;background:#e0e0e0;"></div>
<div class="a" style="left:564px;top:434px;width:1px;height:136px;background:#e0e0e0;"></div>
<div class="a" style="left:606px;top:434px;width:1px;height:136px;background:#e0e0e0;"></div>
<div class="a" style="left:680px;top:434px;width:1px;height:136px;background:#e0e0e0;"></div>
<div class="a" style="left:740px;top:434px;width:1px;height:136px;background:#e0e0e0;"></div>
<div class="a" style="left:790px;top:434px;width:1px;height:136px;background:#e0e0e0;"></div>
<div class="a" style="left:868px;top:434px;width:1px;height:136px;background:#e0e0e0;"></div>
<div class="a" style="left:890px;top:434px;width:1px;height:136px;background:#e0e0e0;"></div>
<div class="a" style="left:968px;top:434px;width:1px;height:136px;background:#e0e0e0;"></div>
<div class="a" style="left:1046px;top:434px;width:1px;height:136px;background:#e0e0e0;"></div>
<div class="a" style="left:1134px;top:434px;width:1px;height:136px;background:#e0e0e0;"></div>
<div class="a" style="left:1253px;top:434px;width:1px;height:136px;background:#e0e0e0;"></div>
<div class="a" style="left:1373px;top:434px;width:1px;height:136px;background:#e0e0e0;"></div>
<div class="a" style="left:7px;top:434px;width:1367px;height:165px;border:1px solid #dcdcdc;box-sizing:border-box;"></div>
<div class="a" style="left:321px;top:435px;width:69px;height:19px;background:#f3f3f3;"></div>
<div class="a" style="left:791px;top:435px;width:99px;height:19px;background:#f3f3f3;"></div>
<div class="a" style="left:7px;top:472px;width:1367px;height:2px;background:#2186ee;"></div>
<div class="t" style="left:-239.5px;top:436.78px;width:600px;font-size:11.6px;line-height:15px;color:#444;text-align:center;letter-spacing:-0.25px;">Type</div>
<div class="t" style="left:-58.0px;top:436.78px;width:600px;font-size:11.6px;line-height:15px;color:#333;text-align:center;font-weight:bold;letter-spacing:-0.3px;">Port Name or Coordinates</div>
<div class="t" style="left:819.5px;top:436.78px;width:600px;font-size:11.6px;line-height:15px;color:#444;text-align:left;letter-spacing:-0.25px;">(I / W)</div>
<div class="t" style="left:629.7px;top:436.78px;width:600px;font-size:11.6px;line-height:15px;color:#444;text-align:center;letter-spacing:-0.25px;">Dem</div>
<div class="t" style="left:707.7px;top:436.78px;width:600px;font-size:11.6px;line-height:15px;color:#444;text-align:center;letter-spacing:-0.25px;">Des</div>
<div class="t" style="left:790.4px;top:436.78px;width:600px;font-size:11.6px;line-height:15px;color:#444;text-align:center;letter-spacing:-0.25px;">Port Charge</div>
<div class="t" style="left:893.7px;top:436.78px;width:600px;font-size:11.6px;line-height:15px;color:#444;text-align:center;letter-spacing:-0.25px;">Arrival</div>
<div class="t" style="left:1013.4px;top:436.78px;width:600px;font-size:11.6px;line-height:15px;color:#444;text-align:center;letter-spacing:-0.25px;">Departure</div>
<div class="t" style="left:-282.5px;top:456.58px;width:600px;font-size:11.6px;line-height:15px;color:#333;text-align:center;letter-spacing:-0.25px;">1</div>
<div class="t" style="left:32.0px;top:456.58px;width:600px;font-size:11.6px;line-height:15px;color:#333;text-align:left;letter-spacing:-0.25px;">Ballast</div>
<div class="t" style="left:98.0px;top:456.58px;width:600px;font-size:11.6px;line-height:15px;color:#333;text-align:left;letter-spacing:-0.25px;">Dunkirk (FR) [+01:00]</div>
<div class="t" style="left:-282.5px;top:475.18px;width:600px;font-size:11.6px;line-height:15px;color:#333;text-align:center;letter-spacing:-0.25px;">2</div>
<div class="t" style="left:32.0px;top:475.18px;width:600px;font-size:11.6px;line-height:15px;color:#333;text-align:left;letter-spacing:-0.25px;">Loading</div>
<div class="t" style="left:98.0px;top:475.18px;width:600px;font-size:11.6px;line-height:15px;color:#333;text-align:left;letter-spacing:-0.25px;">New York (US) [-05:00]</div>
<div class="t" style="left:-282.5px;top:495.08px;width:600px;font-size:11.6px;line-height:15px;color:#333;text-align:center;letter-spacing:-0.25px;">3</div>
<div class="t" style="left:32.0px;top:495.08px;width:600px;font-size:11.6px;line-height:15px;color:#333;text-align:left;letter-spacing:-0.25px;">Dischg.</div>
<div class="t" style="left:98.0px;top:495.08px;width:600px;font-size:11.6px;line-height:15px;color:#333;text-align:left;letter-spacing:-0.25px;">Izmir (TR) [+03:00]</div>
<div class="t" style="left:-282.5px;top:514.18px;width:600px;font-size:11.6px;line-height:15px;color:#333;text-align:center;letter-spacing:-0.25px;">4</div>
<div class="t" style="left:-282.5px;top:533.58px;width:600px;font-size:11.6px;line-height:15px;color:#333;text-align:center;letter-spacing:-0.25px;">5</div>
<div class="t" style="left:32.0px;top:553.08px;width:600px;font-size:11.6px;line-height:15px;color:#333;text-align:left;letter-spacing:-0.25px;">Margin</div>
<svg class="a" style="left:306px;top:457.5px;" width="13" height="13" viewBox="0 0 13 13"><circle cx="6.5" cy="6.5" r="6.3" fill="#1a73d9"/><rect x="5.6" y="5.2" width="1.9" height="5" fill="#fff"/><circle cx="6.55" cy="3.4" r="1.05" fill="#fff"/></svg>
<svg class="a" style="left:289px;top:475.6px;" width="14" height="14" viewBox="0 0 14 14"><circle cx="5.6" cy="5.6" r="4.4" fill="none" stroke="#6d6d6d" stroke-width="1.2"/><line x1="8.8" y1="8.8" x2="13" y2="13" stroke="#6d6d6d" stroke-width="1.5"/></svg>
<svg class="a" style="left:306px;top:476.1px;" width="13" height="13" viewBox="0 0 13 13"><circle cx="6.5" cy="6.5" r="6.3" fill="#1a73d9"/><rect x="5.6" y="5.2" width="1.9" height="5" fill="#fff"/><circle cx="6.55" cy="3.4" r="1.05" fill="#fff"/></svg>
<svg class="a" style="left:349.5px;top:475.6px;" width="12" height="13" viewBox="0 0 12 13"><ellipse cx="6" cy="11" rx="5.5" ry="2" fill="#9ab8e8"/><circle cx="6" cy="4.6" r="3.3" fill="none" stroke="#3cb43c" stroke-width="1.8"/><path d="M4 7.3 L6 10.5 L8 7.3" fill="#3cb43c"/></svg>
<svg class="a" style="left:289px;top:495.5px;" width="14" height="14" viewBox="0 0 14 14"><circle cx="5.6" cy="5.6" r="4.4" fill="none" stroke="#6d6d6d" stroke-width="1.2"/><line x1="8.8" y1="8.8" x2="13" y2="13" stroke="#6d6d6d" stroke-width="1.5"/></svg>
<svg class="a" style="left:306px;top:496.0px;" width="13" height="13" viewBox="0 0 13 13"><circle cx="6.5" cy="6.5" r="6.3" fill="#1a73d9"/><rect x="5.6" y="5.2" width="1.9" height="5" fill="#fff"/><circle cx="6.55" cy="3.4" r="1.05" fill="#fff"/></svg>
<svg class="a" style="left:349.5px;top:495.5px;" width="12" height="13" viewBox="0 0 12 13"><ellipse cx="6" cy="11" rx="5.5" ry="2" fill="#9ab8e8"/><circle cx="6" cy="4.6" r="3.3" fill="none" stroke="#3cb43c" stroke-width="1.8"/><path d="M4 7.3 L6 10.5 L8 7.3" fill="#3cb43c"/></svg>
<svg class="a" style="left:349.5px;top:457px;" width="12" height="13" viewBox="0 0 12 13"><ellipse cx="6" cy="11" rx="5.5" ry="2" fill="#9ab8e8"/><circle cx="6" cy="4.6" r="3.3" fill="none" stroke="#3cb43c" stroke-width="1.8"/><path d="M4 7.3 L6 10.5 L8 7.3" fill="#3cb43c"/></svg>
<svg class="a" style="left:306px;top:516.6px;" width="12" height="12" viewBox="0 0 12 12"><path d="M1 11 L1.5 8 L8.5 1 L11 3.5 L4 10.5 Z" fill="#2f78c9"/></svg>
<div class="t" style="left:1257.5px;top:456.58px;width:600px;font-size:11.6px;line-height:15px;color:#333;text-align:left;letter-spacing:-0.25px;">2020-09-10 01:29</div>
<div class="t" style="left:264.0px;top:475.18px;width:600px;font-size:11.6px;line-height:15px;color:#333;text-align:right;letter-spacing:-0.25px;">6.43</div>
<svg class="a" style="left:872px;top:475.1px;" width="16" height="16" viewBox="0 0 16 16"><path d="M5.7 5.2 L14.2 1.6" stroke="#ababab" stroke-width="2"/><rect x="0.9" y="5.6" width="3.9" height="1.8" fill="#a5a5a5"/><path d="M5 5.2 V11.8" stroke="#cfcfcf" stroke-width="1.3"/><rect x="3" y="12.9" width="4.3" height="1.8" fill="#a5a5a5"/><path d="M13.6 2.5 V7.5" stroke="#d8d8d8" stroke-width="0.8"/></svg>
<div class="t" style="left:442.5px;top:475.18px;width:600px;font-size:11.6px;line-height:15px;color:#333;text-align:right;letter-spacing:-0.25px;">5,000.00</div>
<svg class="a" style="left:1049px;top:475.6px;" width="14" height="14" viewBox="0 0 14 14"><circle cx="5.6" cy="5.6" r="4.4" fill="none" stroke="#6d6d6d" stroke-width="1.2"/><line x1="8.8" y1="8.8" x2="13" y2="13" stroke="#6d6d6d" stroke-width="1.5"/></svg>
<div class="t" style="left:530.0px;top:475.18px;width:600px;font-size:11.6px;line-height:15px;color:#333;text-align:right;letter-spacing:-0.25px;">100,000.00</div>
<div class="t" style="left:1138.5px;top:475.18px;width:600px;font-size:11.6px;line-height:15px;color:#333;text-align:left;letter-spacing:-0.25px;">2020-09-19 07:01</div>
<div class="t" style="left:1257.5px;top:475.18px;width:600px;font-size:11.6px;line-height:15px;color:#333;text-align:left;letter-spacing:-0.25px;">2020-09-26 05:18</div>
<div class="t" style="left:264.0px;top:495.08px;width:600px;font-size:11.6px;line-height:15px;color:#333;text-align:right;letter-spacing:-0.25px;">6.43</div>
<svg class="a" style="left:872px;top:495.0px;" width="16" height="16" viewBox="0 0 16 16"><path d="M5.7 5.2 L14.2 1.6" stroke="#ababab" stroke-width="2"/><rect x="0.9" y="5.6" width="3.9" height="1.8" fill="#a5a5a5"/><path d="M5 5.2 V11.8" stroke="#cfcfcf" stroke-width="1.3"/><rect x="3" y="12.9" width="4.3" height="1.8" fill="#a5a5a5"/><path d="M13.6 2.5 V7.5" stroke="#d8d8d8" stroke-width="0.8"/></svg>
<div class="t" style="left:442.5px;top:495.08px;width:600px;font-size:11.6px;line-height:15px;color:#333;text-align:right;letter-spacing:-0.25px;">5,999.00</div>
<svg class="a" style="left:1049px;top:495.5px;" width="14" height="14" viewBox="0 0 14 14"><circle cx="5.6" cy="5.6" r="4.4" fill="none" stroke="#6d6d6d" stroke-width="1.2"/><line x1="8.8" y1="8.8" x2="13" y2="13" stroke="#6d6d6d" stroke-width="1.5"/></svg>
<div class="t" style="left:530.0px;top:495.08px;width:600px;font-size:11.6px;line-height:15px;color:#333;text-align:right;letter-spacing:-0.25px;">50,000.00</div>
<div class="t" style="left:1138.5px;top:495.08px;width:600px;font-size:11.6px;line-height:15px;color:#333;text-align:left;letter-spacing:-0.25px;">2020-10-10 22:11</div>
<div class="t" style="left:1257.5px;top:495.08px;width:600px;font-size:11.6px;line-height:15px;color:#333;text-align:left;letter-spacing:-0.25px;">2020-10-17 20:28</div>
<svg class="a" style="left:1359px;top:457px;" width="14" height="15" viewBox="0 0 14 15"><rect x="0.7" y="2.2" width="11.8" height="11.4" fill="#fdfdf4" stroke="#6f6f6f" stroke-width="1.1"/><rect x="0.15" y="1.6" width="12.9" height="2.9" fill="#e8222a"/><g fill="#555"><rect x="2.8" y="0.4" width="1.2" height="2.2" rx="0.5"/><rect x="9.3" y="0.4" width="1.2" height="2.2" rx="0.5"/></g><g fill="#8a8a8a"><rect x="3" y="7" width="1.4" height="1.4"/><rect x="5.9" y="7" width="1.4" height="1.4"/><rect x="8.8" y="7" width="1.4" height="1.4"/><rect x="3" y="9.7" width="1.4" height="1.4"/><rect x="5.9" y="9.7" width="1.4" height="1.4"/><rect x="8.8" y="9.7" width="1.4" height="1.4"/></g></svg>
<svg class="a" style="left:1239px;top:475.6px;" width="14" height="15" viewBox="0 0 14 15"><rect x="0.7" y="2.2" width="11.8" height="11.4" fill="#fdfdf4" stroke="#6f6f6f" stroke-width="1.1"/><rect x="0.15" y="1.6" width="12.9" height="2.9" fill="#e8222a"/><g fill="#555"><rect x="2.8" y="0.4" width="1.2" height="2.2" rx="0.5"/><rect x="9.3" y="0.4" width="1.2" height="2.2" rx="0.5"/></g><g fill="#8a8a8a"><rect x="3" y="7" width="1.4" height="1.4"/><rect x="5.9" y="7" width="1.4" height="1.4"/><rect x="8.8" y="7" width="1.4" height="1.4"/><rect x="3" y="9.7" width="1.4" height="1.4"/><rect x="5.9" y="9.7" width="1.4" height="1.4"/><rect x="8.8" y="9.7" width="1.4" height="1.4"/></g></svg>
<div class="a" style="left:28px;top:576px;width:20px;height:17px;box-sizing:border-box;border:1px solid #d9d9d9;background:#fdfdfd"></div>
<svg class="a" style="left:28px;top:576px;" width="20" height="17" viewBox="0 0 20 17"><g fill="#555"><rect x="6.2" y="6.4" width="7.3" height="7.4"/><rect x="5.2" y="3.6" width="9.3" height="1.9"/><rect x="8.2" y="2.6" width="3.4" height="1.2"/></g></svg>
<div class="a" style="left:50px;top:576px;width:20px;height:17px;box-sizing:border-box;border:1px solid #d9d9d9;background:#fdfdfd"></div>
<svg class="a" style="left:50px;top:576px;" width="20" height="17" viewBox="0 0 20 17"><circle cx="10" cy="8.2" r="5.8" fill="#66c47a"/><rect x="8.8" y="4.6" width="2.4" height="7.2" fill="#fff"/><rect x="6.4" y="7" width="7.2" height="2.4" fill="#fff"/></svg>
<div class="a" style="left:72px;top:576px;width:20px;height:17px;box-sizing:border-box;border:1px solid #d9d9d9;background:#fdfdfd"></div>
<svg class="a" style="left:72px;top:576px;" width="20" height="17" viewBox="0 0 20 17"><rect x="2.4" y="5" width="4.9" height="1.9" fill="#2f80d6"/><path d="M8.3 5.95 H13" stroke="#444" stroke-width="1"/><path d="M12.2 4.4 L14.7 5.95 L12.2 7.5 Z" fill="#444"/><g fill="#aaa"><rect x="11.7" y="1" width="4.5" height="2"/><rect x="11.7" y="8.4" width="4.5" height="2"/><rect x="11.7" y="12.3" width="4.5" height="2"/></g></svg>
<div class="a" style="left:94px;top:576px;width:20px;height:17px;box-sizing:border-box;border:1px solid #d9d9d9;background:#fdfdfd"></div>
<svg class="a" style="left:94px;top:576px;" width="20" height="17" viewBox="0 0 20 17"><path d="M3.9 8.15 H6.5" stroke="#444" stroke-width="1"/><path d="M5.8 6.6 L8 8.15 L5.8 9.7 Z" fill="#444"/><rect x="8.4" y="6.9" width="7.8" height="2.5" fill="#555"/><g fill="#aaa"><rect x="8.4" y="3" width="3" height="2"/><rect x="13.3" y="3" width="2.9" height="2"/><rect x="8.4" y="11.3" width="3" height="2"/><rect x="13.3" y="11.3" width="2.9" height="2"/></g></svg>
<div class="a" style="left:116px;top:576px;width:20px;height:17px;box-sizing:border-box;border:1px solid #d9d9d9;background:#fdfdfd"></div>
<svg class="a" style="left:116px;top:576px;" width="20" height="17" viewBox="0 0 20 17"><rect x="3.6" y="6.9" width="12.8" height="2" fill="#2f80d6"/><g fill="#aaa"><rect x="3.6" y="3" width="3.5" height="2"/><rect x="12.9" y="3" width="3.5" height="2"/><rect x="3.6" y="10.4" width="3.5" height="2"/><rect x="8.3" y="10.4" width="3.5" height="2"/><rect x="12.9" y="10.4" width="3.5" height="2"/></g><path d="M8.5 4 L9.75 2 L11 4 Z M9.2 3.8 H10.3 V5.5 H9.2 Z" fill="#333"/></svg>
<div class="a" style="left:139px;top:576px;width:20px;height:17px;box-sizing:border-box;border:1px solid #d9d9d9;background:#fdfdfd"></div>
<svg class="a" style="left:139px;top:576px;" width="20" height="17" viewBox="0 0 20 17"><rect x="3.7" y="6.9" width="12.3" height="2" fill="#2f80d6"/><g fill="#aaa"><rect x="3.7" y="3" width="3.4" height="2"/><rect x="8.7" y="3" width="2.9" height="2"/><rect x="13.1" y="3" width="2.9" height="2"/><rect x="3.7" y="10.4" width="3.4" height="2"/><rect x="13.1" y="10.4" width="2.9" height="2"/></g><path d="M8.9 11.8 L10.15 13.8 L11.4 11.8 Z M9.6 10.2 H10.7 V12 H9.6 Z" fill="#333"/></svg>
<div class="t" style="left:-150.5px;top:577.98px;width:600px;font-size:11.6px;line-height:15px;color:#333;text-align:right;font-weight:bold;letter-spacing:-0.3px;">8,014</div>
<div class="t" style="left:-86.5px;top:577.98px;width:600px;font-size:11.6px;line-height:15px;color:#333;text-align:right;font-weight:bold;letter-spacing:-0.3px;">2,361</div>
<div class="t" style="left:632.0px;top:577.98px;width:600px;font-size:11.6px;line-height:15px;color:#333;text-align:left;letter-spacing:-0.25px;">23.83</div>
<div class="t" style="left:530.0px;top:577.98px;width:600px;font-size:11.6px;line-height:15px;color:#333;text-align:right;letter-spacing:-0.25px;">150,000.00</div>
<div class="t" style="left:1139.0px;top:577.98px;width:600px;font-size:11.6px;line-height:15px;color:#333;text-align:left;font-weight:bold;letter-spacing:-0.35px;">2020-09-10 01:29</div>
<div class="t" style="left:1257.5px;top:577.98px;width:600px;font-size:11.6px;line-height:15px;color:#333;text-align:left;font-weight:bold;letter-spacing:-0.35px;">2020-10-17 20:28</div>
<div class="a" style="left:7px;top:605px;width:110px;height:20px;background:#f8f8f8;border:1px solid #d0d0d0;box-sizing:border-box;"></div>
<div class="t" style="left:-237.5px;top:607.98px;width:600px;font-size:11.6px;line-height:15px;color:#333;text-align:center;font-weight:bold;letter-spacing:-0.35px;">Get Distance (F9)</div>
<div class="a" style="left:122px;top:605px;width:111px;height:20px;background:#f8f8f8;border:1px solid #d0d0d0;box-sizing:border-box;"></div>
<div class="t" style="left:-122.5px;top:607.98px;width:600px;font-size:11.6px;line-height:15px;color:#333;text-align:center;font-weight:bold;letter-spacing:-0.35px;">To Distance (F10)</div>
<div class="a" style="left:1092px;top:605px;width:86px;height:20px;background:#8ebce6;"></div>
<svg class="a" style="left:1102px;top:608px;" width="14" height="14" viewBox="0 0 14 14"><circle cx="7" cy="7" r="6.5" fill="#3d86d6"/><path d="M3 3 Q6 4 5 7 Q4 9 6 12 M9 1.5 Q8 4 10 5 Q12 6 13 8" fill="none" stroke="#8ebce6" stroke-width="1.3"/></svg>
<div class="t" style="left:1121.0px;top:607.98px;width:600px;font-size:11.6px;line-height:15px;color:#333;text-align:left;letter-spacing:-0.25px;">Port Local</div>
<div class="a" style="left:1182px;top:605px;width:77px;height:20px;background:#fcfcfc;border:1px solid #d8d8d8;box-sizing:border-box;"></div>
<svg class="a" style="left:1192px;top:608px;" width="14" height="13" viewBox="0 0 14 13"><rect x="0.8" y="0.8" width="12.4" height="8.5" fill="none" stroke="#555" stroke-width="1.5"/><rect x="6" y="9.5" width="2" height="2" fill="#555"/><rect x="3.5" y="11.3" width="7" height="1.5" fill="#555"/></svg>
<div class="t" style="left:1211.0px;top:607.98px;width:600px;font-size:11.6px;line-height:15px;color:#333;text-align:left;letter-spacing:-0.25px;">PC Time</div>
<div class="a" style="left:1264px;top:605px;width:110px;height:20px;background:#ffffff;border:1px solid #d8d8d8;box-sizing:border-box;"></div>
<div class="t" style="left:1269.0px;top:607.98px;width:600px;font-size:11.6px;line-height:15px;color:#333;text-align:left;letter-spacing:-0.25px;">Port local time</div>
<svg class="a" style="left:1361px;top:613px;" width="8" height="5" viewBox="0 0 8 5"><path d="M0 0 H8 L4 4.5 Z" fill="#333"/></svg>
<div class="t" style="left:7.0px;top:642.29px;width:600px;font-size:13.6px;line-height:18px;color:#a8491b;text-align:left;font-weight:bold;letter-spacing:-0.1px;">Operation Expense</div>
<div class="a" style="left:8px;top:663px;width:111px;height:115px;background:#f3f3f3;"></div>
<div class="a" style="left:241px;top:663px;width:111px;height:115px;background:#f3f3f3;"></div>
<div class="a" style="left:119px;top:663px;width:122px;height:115px;background:#fdfde4;"></div>
<div class="a" style="left:352px;top:663px;width:122px;height:115px;background:#fdfde4;"></div>
<div class="a" style="left:8px;top:663px;width:467px;height:1px;background:#e0e0e0;"></div>
<div class="a" style="left:8px;top:682px;width:467px;height:1px;background:#e0e0e0;"></div>
<div class="a" style="left:8px;top:701px;width:467px;height:1px;background:#e0e0e0;"></div>
<div class="a" style="left:8px;top:721px;width:467px;height:1px;background:#e0e0e0;"></div>
<div class="a" style="left:8px;top:740px;width:467px;height:1px;background:#e0e0e0;"></div>
<div class="a" style="left:8px;top:759px;width:467px;height:1px;background:#e0e0e0;"></div>
<div class="a" style="left:8px;top:778px;width:467px;height:1px;background:#e0e0e0;"></div>
<div class="a" style="left:8px;top:663px;width:1px;height:116px;background:#e0e0e0;"></div>
<div class="a" style="left:119px;top:663px;width:1px;height:116px;background:#e0e0e0;"></div>
<div class="a" style="left:241px;top:663px;width:1px;height:116px;background:#e0e0e0;"></div>
<div class="a" style="left:352px;top:663px;width:1px;height:116px;background:#e0e0e0;"></div>
<div class="a" style="left:474px;top:663px;width:1px;height:116px;background:#e0e0e0;"></div>
<div class="t" style="left:12.0px;top:666.28px;width:600px;font-size:11.6px;line-height:15px;color:#333;text-align:left;letter-spacing:-0.25px;">Dem/Des</div>
<div class="t" style="left:-362.5px;top:666.28px;width:600px;font-size:11.6px;line-height:15px;color:#333;text-align:right;letter-spacing:-0.25px;">10,999.00</div>
<div class="t" style="left:245.5px;top:666.28px;width:600px;font-size:11.6px;line-height:15px;color:#333;text-align:left;letter-spacing:-0.25px;">Bunker Expense</div>
<div class="t" style="left:-130.0px;top:666.28px;width:600px;font-size:11.6px;line-height:15px;color:#333;text-align:right;letter-spacing:-0.25px;">179,640.32</div>
<svg class="a" style="left:121px;top:666.7px;" width="14" height="14" viewBox="0 0 14 14"><circle cx="5.6" cy="5.6" r="4.4" fill="none" stroke="#6d6d6d" stroke-width="1.2"/><line x1="8.8" y1="8.8" x2="13" y2="13" stroke="#6d6d6d" stroke-width="1.5"/></svg>
<svg class="a" style="left:354.5px;top:666.7px;" width="14" height="14" viewBox="0 0 14 14"><circle cx="5.6" cy="5.6" r="4.4" fill="none" stroke="#6d6d6d" stroke-width="1.2"/><line x1="8.8" y1="8.8" x2="13" y2="13" stroke="#6d6d6d" stroke-width="1.5"/></svg>
<div class="t" style="left:12.0px;top:685.38px;width:600px;font-size:11.6px;line-height:15px;color:#333;text-align:left;letter-spacing:-0.25px;">Add Comm.</div>
<div class="t" style="left:-362.5px;top:685.38px;width:600px;font-size:11.6px;line-height:15px;color:#333;text-align:right;letter-spacing:-0.25px;">41,343.75</div>
<div class="t" style="left:245.5px;top:685.38px;width:600px;font-size:11.6px;line-height:15px;color:#333;text-align:left;letter-spacing:-0.25px;">C.E.V.</div>
<div class="t" style="left:-130.0px;top:685.38px;width:600px;font-size:11.6px;line-height:15px;color:#333;text-align:right;letter-spacing:-0.25px;">1,795.50</div>
<svg class="a" style="left:121px;top:685.8px;" width="14" height="14" viewBox="0 0 14 14"><circle cx="5.6" cy="5.6" r="4.4" fill="none" stroke="#6d6d6d" stroke-width="1.2"/><line x1="8.8" y1="8.8" x2="13" y2="13" stroke="#6d6d6d" stroke-width="1.5"/></svg>
<svg class="a" style="left:354.5px;top:685.8px;" width="14" height="14" viewBox="0 0 14 14"><circle cx="5.6" cy="5.6" r="4.4" fill="none" stroke="#6d6d6d" stroke-width="1.2"/><line x1="8.8" y1="8.8" x2="13" y2="13" stroke="#6d6d6d" stroke-width="1.5"/></svg>
<div class="t" style="left:12.0px;top:704.48px;width:600px;font-size:11.6px;line-height:15px;color:#333;text-align:left;letter-spacing:-0.25px;">Brokerage</div>
<div class="t" style="left:-362.5px;top:704.48px;width:600px;font-size:11.6px;line-height:15px;color:#333;text-align:right;letter-spacing:-0.25px;">13,781.25</div>
<div class="t" style="left:245.5px;top:704.48px;width:600px;font-size:11.6px;line-height:15px;color:#333;text-align:left;letter-spacing:-0.25px;">ILOHC</div>
<div class="t" style="left:-130.0px;top:704.48px;width:600px;font-size:11.6px;line-height:15px;color:#333;text-align:right;letter-spacing:-0.25px;">4,500.00</div>
<svg class="a" style="left:121px;top:704.9px;" width="14" height="14" viewBox="0 0 14 14"><circle cx="5.6" cy="5.6" r="4.4" fill="none" stroke="#6d6d6d" stroke-width="1.2"/><line x1="8.8" y1="8.8" x2="13" y2="13" stroke="#6d6d6d" stroke-width="1.5"/></svg>
<svg class="a" style="left:354.5px;top:704.9px;" width="14" height="14" viewBox="0 0 14 14"><circle cx="5.6" cy="5.6" r="4.4" fill="none" stroke="#6d6d6d" stroke-width="1.2"/><line x1="8.8" y1="8.8" x2="13" y2="13" stroke="#6d6d6d" stroke-width="1.5"/></svg>
<div class="t" style="left:12.0px;top:723.58px;width:600px;font-size:11.6px;line-height:15px;color:#333;text-align:left;letter-spacing:-0.25px;">Freight Tax</div>
<div class="t" style="left:-362.5px;top:723.58px;width:600px;font-size:11.6px;line-height:15px;color:#333;text-align:right;letter-spacing:-0.25px;">0.00</div>
<div class="t" style="left:245.5px;top:723.58px;width:600px;font-size:11.6px;line-height:15px;color:#333;text-align:left;letter-spacing:-0.25px;">Ballast Bonus</div>
<div class="t" style="left:-130.0px;top:723.58px;width:600px;font-size:11.6px;line-height:15px;color:#333;text-align:right;letter-spacing:-0.25px;"></div>
<svg class="a" style="left:121px;top:724px;" width="14" height="14" viewBox="0 0 14 14"><circle cx="5.6" cy="5.6" r="4.4" fill="none" stroke="#6d6d6d" stroke-width="1.2"/><line x1="8.8" y1="8.8" x2="13" y2="13" stroke="#6d6d6d" stroke-width="1.5"/></svg>
<svg class="a" style="left:354.5px;top:724px;" width="14" height="14" viewBox="0 0 14 14"><circle cx="5.6" cy="5.6" r="4.4" fill="none" stroke="#6d6d6d" stroke-width="1.2"/><line x1="8.8" y1="8.8" x2="13" y2="13" stroke="#6d6d6d" stroke-width="1.5"/></svg>
<div class="t" style="left:12.0px;top:743.08px;width:600px;font-size:11.6px;line-height:15px;color:#333;text-align:left;letter-spacing:-0.25px;">Liner Terms</div>
<div class="t" style="left:-362.5px;top:743.08px;width:600px;font-size:11.6px;line-height:15px;color:#333;text-align:right;letter-spacing:-0.25px;">0.00</div>
<div class="t" style="left:245.5px;top:743.08px;width:600px;font-size:11.6px;line-height:15px;color:#333;text-align:left;letter-spacing:-0.25px;">Routing Service</div>
<div class="t" style="left:-130.0px;top:743.08px;width:600px;font-size:11.6px;line-height:15px;color:#333;text-align:right;letter-spacing:-0.25px;"></div>
<svg class="a" style="left:121px;top:743.5px;" width="14" height="14" viewBox="0 0 14 14"><circle cx="5.6" cy="5.6" r="4.4" fill="none" stroke="#6d6d6d" stroke-width="1.2"/><line x1="8.8" y1="8.8" x2="13" y2="13" stroke="#6d6d6d" stroke-width="1.5"/></svg>
<svg class="a" style="left:354.5px;top:743.5px;" width="14" height="14" viewBox="0 0 14 14"><circle cx="5.6" cy="5.6" r="4.4" fill="none" stroke="#6d6d6d" stroke-width="1.2"/><line x1="8.8" y1="8.8" x2="13" y2="13" stroke="#6d6d6d" stroke-width="1.5"/></svg>
<div class="t" style="left:12.0px;top:762.18px;width:600px;font-size:11.6px;line-height:15px;color:#333;text-align:left;letter-spacing:-0.25px;">Port Charge</div>
<div class="t" style="left:-362.5px;top:762.18px;width:600px;font-size:11.6px;line-height:15px;color:#333;text-align:right;letter-spacing:-0.25px;">150,000.00</div>
<div class="t" style="left:245.5px;top:762.18px;width:600px;font-size:11.6px;line-height:15px;color:#333;text-align:left;letter-spacing:-0.25px;">Others</div>
<div class="t" style="left:-130.0px;top:762.18px;width:600px;font-size:11.6px;line-height:15px;color:#333;text-align:right;letter-spacing:-0.25px;">0.00</div>
<svg class="a" style="left:121px;top:762.6px;" width="14" height="14" viewBox="0 0 14 14"><circle cx="5.6" cy="5.6" r="4.4" fill="none" stroke="#6d6d6d" stroke-width="1.2"/><line x1="8.8" y1="8.8" x2="13" y2="13" stroke="#6d6d6d" stroke-width="1.5"/></svg>
<svg class="a" style="left:354.5px;top:762.6px;" width="14" height="14" viewBox="0 0 14 14"><circle cx="5.6" cy="5.6" r="4.4" fill="none" stroke="#6d6d6d" stroke-width="1.2"/><line x1="8.8" y1="8.8" x2="13" y2="13" stroke="#6d6d6d" stroke-width="1.5"/></svg>
<div class="t" style="left:484.5px;top:642.29px;width:600px;font-size:13.6px;line-height:18px;color:#a8491b;text-align:left;font-weight:bold;letter-spacing:-0.1px;">Bunker Expense</div>
<div class="a" style="left:484px;top:663px;width:412px;height:19px;background:#f3f3f3;"></div>
<div class="a" style="left:484px;top:682px;width:81px;height:58px;background:#f3f3f3;"></div>
<div class="a" style="left:675px;top:682px;width:221px;height:58px;background:#fdfde4;"></div>
<div class="a" style="left:484px;top:740px;width:412px;height:38px;background:#f0f4fc;"></div>
<div class="a" style="left:484px;top:663px;width:413px;height:1px;background:#e0e0e0;"></div>
<div class="a" style="left:484px;top:682px;width:413px;height:1px;background:#e0e0e0;"></div>
<div class="a" style="left:484px;top:701px;width:413px;height:1px;background:#e0e0e0;"></div>
<div class="a" style="left:484px;top:720px;width:413px;height:1px;background:#e0e0e0;"></div>
<div class="a" style="left:484px;top:740px;width:413px;height:1px;background:#e0e0e0;"></div>
<div class="a" style="left:484px;top:759px;width:413px;height:1px;background:#e0e0e0;"></div>
<div class="a" style="left:484px;top:778px;width:413px;height:1px;background:#e0e0e0;"></div>
<div class="a" style="left:484px;top:663px;width:1px;height:116px;background:#e0e0e0;"></div>
<div class="a" style="left:565px;top:663px;width:1px;height:116px;background:#e0e0e0;"></div>
<div class="a" style="left:675px;top:663px;width:1px;height:116px;background:#e0e0e0;"></div>
<div class="a" style="left:785px;top:663px;width:1px;height:116px;background:#e0e0e0;"></div>
<div class="a" style="left:896px;top:663px;width:1px;height:116px;background:#e0e0e0;"></div>
<div class="t" style="left:320.1px;top:665.98px;width:600px;font-size:11.6px;line-height:15px;color:#444;text-align:center;letter-spacing:-0.25px;">Price / MT</div>
<svg class="a" style="left:689px;top:667px;" width="12" height="12" viewBox="0 0 12 12"><rect x="0.5" y="0.5" width="11" height="11" fill="#fff" stroke="#9a9a9a"/><path d="M2.6 6.2 L5 8.6 L9.6 3.4" fill="none" stroke="#333" stroke-width="1.3"/></svg>
<div class="t" style="left:706.5px;top:665.98px;width:600px;font-size:11.6px;line-height:15px;color:#444;text-align:left;letter-spacing:-0.25px;">Consumption</div>
<div class="t" style="left:540.9px;top:665.98px;width:600px;font-size:11.6px;line-height:15px;color:#444;text-align:center;letter-spacing:-0.25px;">Expense</div>
<div class="t" style="left:489.0px;top:685.38px;width:600px;font-size:11.6px;line-height:15px;color:#333;text-align:left;letter-spacing:-0.25px;">VLSFO</div>
<div class="t" style="left:71.5px;top:685.38px;width:600px;font-size:11.6px;line-height:15px;color:#333;text-align:right;letter-spacing:-0.25px;">340.00</div>
<div class="t" style="left:181.5px;top:685.38px;width:600px;font-size:11.6px;line-height:15px;color:#333;text-align:right;letter-spacing:-0.25px;">443.31</div>
<div class="t" style="left:292.5px;top:685.38px;width:600px;font-size:11.6px;line-height:15px;color:#333;text-align:right;letter-spacing:-0.25px;">150,726.51</div>
<div class="t" style="left:489.0px;top:704.18px;width:600px;font-size:11.6px;line-height:15px;color:#333;text-align:left;letter-spacing:-0.25px;">MGO</div>
<div class="t" style="left:71.5px;top:704.18px;width:600px;font-size:11.6px;line-height:15px;color:#333;text-align:right;letter-spacing:-0.25px;">380.00</div>
<div class="t" style="left:181.5px;top:704.18px;width:600px;font-size:11.6px;line-height:15px;color:#333;text-align:right;letter-spacing:-0.25px;">8.96</div>
<div class="t" style="left:292.5px;top:704.18px;width:600px;font-size:11.6px;line-height:15px;color:#333;text-align:right;letter-spacing:-0.25px;">3,405.67</div>
<div class="t" style="left:489.0px;top:723.08px;width:600px;font-size:11.6px;line-height:15px;color:#333;text-align:left;letter-spacing:-0.25px;">ULSFO</div>
<div class="t" style="left:71.5px;top:723.08px;width:600px;font-size:11.6px;line-height:15px;color:#333;text-align:right;letter-spacing:-0.25px;">100.00</div>
<div class="t" style="left:181.5px;top:723.08px;width:600px;font-size:11.6px;line-height:15px;color:#333;text-align:right;letter-spacing:-0.25px;">255.08</div>
<div class="t" style="left:292.5px;top:723.08px;width:600px;font-size:11.6px;line-height:15px;color:#333;text-align:right;letter-spacing:-0.25px;">25,508.15</div>
<div class="a" style="left:907px;top:663px;width:111px;height:96px;background:#f3f3f3;"></div>
<div class="a" style="left:1018px;top:701px;width:122px;height:58px;background:#fdfde4;"></div>
<div class="a" style="left:1140px;top:663px;width:111px;height:115px;background:#f3f3f3;"></div>
<div class="a" style="left:1251px;top:663px;width:122px;height:115px;background:#fdfde4;"></div>
<div class="a" style="left:907px;top:663px;width:234px;height:1px;background:#e0e0e0;"></div>
<div class="a" style="left:907px;top:682px;width:234px;height:1px;background:#e0e0e0;"></div>
<div class="a" style="left:907px;top:701px;width:234px;height:1px;background:#e0e0e0;"></div>
<div class="a" style="left:907px;top:721px;width:234px;height:1px;background:#e0e0e0;"></div>
<div class="a" style="left:907px;top:740px;width:234px;height:1px;background:#e0e0e0;"></div>
<div class="a" style="left:907px;top:759px;width:234px;height:1px;background:#e0e0e0;"></div>
<div class="a" style="left:907px;top:663px;width:1px;height:97px;background:#e0e0e0;"></div>
<div class="a" style="left:1018px;top:663px;width:1px;height:97px;background:#e0e0e0;"></div>
<div class="a" style="left:1140px;top:663px;width:1px;height:97px;background:#e0e0e0;"></div>
<div class="a" style="left:1140px;top:663px;width:234px;height:1px;background:#e0e0e0;"></div>
<div class="a" style="left:1140px;top:682px;width:234px;height:1px;background:#e0e0e0;"></div>
<div class="a" style="left:1140px;top:701px;width:234px;height:1px;background:#e0e0e0;"></div>
<div class="a" style="left:1140px;top:721px;width:234px;height:1px;background:#e0e0e0;"></div>
<div class="a" style="left:1140px;top:740px;width:234px;height:1px;background:#e0e0e0;"></div>
<div class="a" style="left:1140px;top:759px;width:234px;height:1px;background:#e0e0e0;"></div>
<div class="a" style="left:1140px;top:778px;width:234px;height:1px;background:#e0e0e0;"></div>
<div class="a" style="left:1140px;top:663px;width:1px;height:116px;background:#e0e0e0;"></div>
<div class="a" style="left:1251px;top:663px;width:1px;height:116px;background:#e0e0e0;"></div>
<div class="a" style="left:1373px;top:663px;width:1px;height:116px;background:#e0e0e0;"></div>
<div class="t" style="left:911.0px;top:665.68px;width:600px;font-size:11.6px;line-height:15px;color:#333;text-align:left;letter-spacing:-0.25px;">Hire / Day</div>
<div class="t" style="left:536.5px;top:665.68px;width:600px;font-size:11.6px;line-height:15px;color:#333;text-align:right;letter-spacing:-0.25px;">9,000.00</div>
<div class="t" style="left:911.0px;top:684.88px;width:600px;font-size:11.6px;line-height:15px;color:#333;text-align:left;letter-spacing:-0.25px;">H/Add Comm.</div>
<div class="t" style="left:536.5px;top:684.88px;width:600px;font-size:11.6px;line-height:15px;color:#333;text-align:right;letter-spacing:-0.25px;">3.75 %</div>
<div class="t" style="left:911.0px;top:704.08px;width:600px;font-size:11.6px;line-height:15px;color:#333;text-align:left;letter-spacing:-0.25px;">Net Hire</div>
<div class="t" style="left:536.5px;top:704.08px;width:600px;font-size:11.6px;line-height:15px;color:#333;text-align:right;letter-spacing:-0.25px;">8,662.50</div>
<div class="t" style="left:911.0px;top:723.98px;width:600px;font-size:11.6px;line-height:15px;color:#333;text-align:left;letter-spacing:-0.25px;">Off Hire</div>
<div class="t" style="left:536.5px;top:723.98px;width:600px;font-size:11.6px;line-height:15px;color:#111;text-align:right;letter-spacing:-0.25px;">0.00</div>
<div class="t" style="left:911.0px;top:743.18px;width:600px;font-size:11.6px;line-height:15px;color:#333;text-align:left;letter-spacing:-0.25px;">C/Base</div>
<div class="t" style="left:536.5px;top:743.18px;width:600px;font-size:11.6px;line-height:15px;color:#333;text-align:right;letter-spacing:-0.25px;">18,575.22</div>
<svg class="a" style="left:1020.5px;top:724.4px;" width="14" height="14" viewBox="0 0 14 14"><circle cx="5.6" cy="5.6" r="4.4" fill="none" stroke="#6d6d6d" stroke-width="1.2"/><line x1="8.8" y1="8.8" x2="13" y2="13" stroke="#6d6d6d" stroke-width="1.5"/></svg>
<div class="t" style="left:1144.0px;top:665.68px;width:600px;font-size:11.6px;line-height:15px;color:#333;text-align:left;letter-spacing:-0.25px;">Revenue</div>
<div class="t" style="left:769.5px;top:665.68px;width:600px;font-size:11.6px;line-height:15px;color:#333;text-align:right;letter-spacing:-0.25px;">1,102,500.00</div>
<div class="t" style="left:1144.0px;top:684.88px;width:600px;font-size:11.6px;line-height:15px;color:#333;text-align:left;letter-spacing:-0.25px;">Op. Expense</div>
<div class="t" style="left:769.5px;top:684.88px;width:600px;font-size:11.6px;line-height:15px;color:#333;text-align:right;letter-spacing:-0.25px;">402,059.82</div>
<div class="t" style="left:1144.0px;top:704.08px;width:600px;font-size:11.6px;line-height:15px;color:#333;text-align:left;letter-spacing:-0.25px;">Op. Profit</div>
<div class="t" style="left:769.5px;top:704.08px;width:600px;font-size:11.6px;line-height:15px;color:#333;text-align:right;letter-spacing:-0.25px;">700,440.18</div>
<div class="t" style="left:1144.0px;top:723.98px;width:600px;font-size:11.6px;line-height:15px;color:#333;text-align:left;letter-spacing:-0.25px;">Total Hire</div>
<div class="t" style="left:769.5px;top:723.98px;width:600px;font-size:11.6px;line-height:15px;color:#333;text-align:right;letter-spacing:-0.25px;">326,648.21</div>
<div class="t" style="left:1144.0px;top:743.18px;width:600px;font-size:11.6px;line-height:15px;color:#333;text-align:left;letter-spacing:-0.25px;">Total Expense</div>
<div class="t" style="left:769.5px;top:743.18px;width:600px;font-size:11.6px;line-height:15px;color:#333;text-align:right;letter-spacing:-0.25px;">728,708.03</div>
<div class="t" style="left:1144.0px;top:762.28px;width:600px;font-size:11.6px;line-height:15px;color:#333;text-align:left;font-weight:bold;letter-spacing:-0.35px;">PROFIT (KRW)</div>
<div class="t" style="left:769.5px;top:762.28px;width:600px;font-size:11.6px;line-height:15px;color:#333;text-align:right;letter-spacing:-0.25px;">373,791.97</div>
<div class="a" style="left:1100px;top:642px;width:93px;height:18px;background:#fafafa;border:1px solid #d8d8d8;box-sizing:border-box;"></div>
<div class="a" style="left:1195px;top:642px;width:100px;height:18px;background:#fafafa;border:1px solid #d8d8d8;box-sizing:border-box;"></div>
<div class="a" style="left:1297px;top:642px;width:77px;height:18px;background:#fafafa;border:1px solid #d8d8d8;box-sizing:border-box;"></div>
<div class="t" style="left:1128.0px;top:643.98px;width:600px;font-size:11.6px;line-height:15px;color:#333;text-align:left;font-weight:bold;letter-spacing:-0.35px;">Result Plus</div>
<div class="t" style="left:1223.0px;top:643.98px;width:600px;font-size:11.6px;line-height:15px;color:#333;text-align:left;font-weight:bold;letter-spacing:-0.35px;">Comparison</div>
<div class="t" style="left:1326.0px;top:643.98px;width:600px;font-size:11.6px;line-height:15px;color:#333;text-align:left;font-weight:bold;letter-spacing:-0.35px;">Remark</div>
<svg class="a" style="left:1109px;top:643px;" width="16" height="16" viewBox="0 0 16 16"><rect x="1" y="2.4" width="5.6" height="1.6" fill="#3cae4a"/><rect x="3" y="0.4" width="1.6" height="5.6" fill="#3cae4a"/><g fill="#777"><rect x="9" y="2" width="6" height="1.5"/><rect x="11" y="5" width="4" height="1.3"/><rect x="11" y="8" width="4" height="1.3"/><rect x="11" y="11" width="4" height="1.3"/><rect x="9" y="14" width="6" height="1.5"/></g></svg>
<svg class="a" style="left:1206px;top:645px;" width="14" height="12" viewBox="0 0 14 12"><rect x="0" y="0" width="8" height="2.6" fill="#5cb87a"/><rect x="0" y="4.5" width="12" height="2.6" fill="#2f78c9"/><rect x="0" y="9" width="10" height="2.6" fill="#444"/></svg>
<svg class="a" style="left:1305px;top:642px;" width="18" height="17" viewBox="0 0 18 17"><rect x="2" y="4" width="11" height="12" fill="#fff" stroke="#666" stroke-width="1"/><circle cx="4.5" cy="4.5" r="3.8" fill="#f9b233"/><path d="M7 13 L8 10 L14 4 L16 6 L10 12 Z" fill="#2f78c9"/></svg>
<div class="a" style="left:2px;top:838px;width:1378px;height:25px;background:#388058;"></div>
<div class="t" style="left:10.0px;top:843.08px;width:600px;font-size:11.3px;line-height:15px;color:#ffffff;text-align:left;letter-spacing:-0.2px;">Reset</div>
<div class="a" style="left:41px;top:850px;width:7px;height:2px;background:#3f3f3f;"></div>
<div class="a" style="left:52px;top:849px;width:109px;height:4px;background:#f4f4f4;box-shadow:inset 0 0 0 1px #dddddd;"></div>
<div class="a" style="left:61px;top:844px;width:7px;height:13px;background:#3d3d3d;border:1px solid #eeeeee;box-sizing:border-box;"></div>
<svg class="a" style="left:164px;top:846px;" width="9" height="9" viewBox="0 0 9 9"><path d="M4.5 0.5 V8.5 M0.5 4.5 H8.5" stroke="#3a3a3a" stroke-width="1.6"/></svg>
<div class="t" style="left:182.5px;top:843.08px;width:600px;font-size:11.3px;line-height:15px;color:#ffffff;text-align:left;letter-spacing:-0.2px;">100 %</div>
<div class="a" style="left:224px;top:841px;width:1px;height:21px;background:#9fc4ad;"></div>
<div class="t" style="left:37.0px;top:843.08px;width:600px;font-size:11.3px;line-height:15px;color:#ffffff;text-align:center;letter-spacing:-0.2px;">Great Circle Line</div>
<div class="a" style="left:451px;top:841px;width:1px;height:21px;background:#9fc4ad;"></div>
<div class="t" style="left:334.5px;top:843.08px;width:600px;font-size:11.3px;line-height:15px;color:#ffffff;text-align:center;letter-spacing:-0.2px;">Anti Piracy : JWLA024 (17th May 2019)</div>
<div class="a" style="left:819px;top:841px;width:1px;height:21px;background:#9fc4ad;"></div>
<div class="t" style="left:657.5px;top:843.08px;width:600px;font-size:11.3px;line-height:15px;color:#ffffff;text-align:center;letter-spacing:-0.2px;">ECA : IMO, Each Country</div>
<svg class="a" style="left:1366px;top:850px;" width="14" height="14" viewBox="0 0 14 14"><g fill="#c8dccf"><rect x="11" y="4" width="1.3" height="1.3"/><rect x="11" y="6" width="1.3" height="1.3"/><rect x="9" y="6" width="1.3" height="1.3"/><rect x="11" y="8" width="1.3" height="1.3"/><rect x="9" y="8" width="1.3" height="1.3"/><rect x="7" y="8" width="1.3" height="1.3"/><rect x="11" y="10" width="1.3" height="1.3"/><rect x="9" y="10" width="1.3" height="1.3"/><rect x="7" y="10" width="1.3" height="1.3"/><rect x="5" y="10" width="1.3" height="1.3"/></g></svg>
<svg class="a" style="left:0px;top:50px;" width="70" height="90" viewBox="0 0 70 90"><rect x="2" y="8" width="59" height="70.7" fill="none" stroke="#f01018" stroke-width="2.1" stroke-dasharray="6 2.4"/></svg>
<svg class="a" style="left:45px;top:33px;" width="44" height="44" viewBox="0 0 44 44"><circle cx="21.5" cy="21.8" r="17.6" fill="#7ba3d3" stroke="#151515" stroke-width="1.4"/></svg>
<div class="t" style="left:-234.0px;top:42.92px;width:600px;font-size:19px;line-height:25px;color:#ffffff;text-align:center;font-weight:bold;">1</div>
<div class="a" style="left:95px;top:107px;width:309px;height:60px;background:#6f97c9;border:1px solid #000;box-sizing:border-box;"></div>
<div class="t" style="left:110.0px;top:123.36px;width:600px;font-size:23.5px;line-height:31px;color:#111;text-align:left;letter-spacing:0.73px;">Click `Create Milestone’.</div>
<div class="a" style="left:368px;top:353px;width:446px;height:190px;background:#ffffff;border:1px solid #c8c8c8;box-sizing:border-box;"></div>
<svg class="a" style="left:372px;top:363px;" width="30" height="30" viewBox="0 0 30 30"><rect x="4.25" y="4.25" width="20.7" height="20.7" fill="#eef7f0" stroke="#2b8a47" stroke-width="1.7"/><g transform="translate(14.6 14.6)"><polygon points="0.00,-7.60 1.76,-4.25 5.37,-5.37 4.25,-1.76 7.60,0.00 4.25,1.76 5.37,5.37 1.76,4.25 0.00,7.60 -1.76,4.25 -5.37,5.37 -4.25,1.76 -7.60,0.00 -4.25,-1.76 -5.37,-5.37 -1.76,-4.25" fill="#8fae95"/><circle r="4.3" fill="#e8f2ea"/><circle r="3.9" fill="none" stroke="#7d9a83" stroke-width="1.1"/><g fill="#2a5a36"><circle cx="3.8" cy="3.8" r="1.1"/><circle cx="-3.8" cy="3.8" r="1.1"/><circle cx="3.8" cy="-3.8" r="1.1"/><circle cx="-3.8" cy="-3.8" r="1.1"/></g><rect x="-1.3" y="-1.3" width="2.6" height="2.6" fill="#062a10"/></g></svg>
<div class="t" style="left:405.0px;top:368.82px;width:600px;font-size:16.4px;line-height:21px;color:#444;text-align:left;letter-spacing:-0.1px;">Milestone</div>
<svg class="a" style="left:775px;top:371px;" width="15" height="15" viewBox="0 0 15 15"><path d="M1 1 L14 14 M14 1 L1 14" stroke="#333" stroke-width="1.7"/></svg>
<div class="t" style="left:383.0px;top:408.01px;width:600px;font-size:16.7px;line-height:22px;color:#555;text-align:left;letter-spacing:0.05px;">Input milestone name.</div>
<div class="a" style="left:382px;top:450px;width:419px;height:31px;background:#ffffff;border:2px solid #3c87d4;box-sizing:border-box;"></div>
<div class="a" style="left:389px;top:455px;width:115px;height:21px;background:#99c3e8;"></div>
<div class="t" style="left:390.0px;top:455.78px;width:600px;font-size:16.5px;line-height:21px;color:#3b4a5a;text-align:left;letter-spacing:-0.2px;">OP_2020-11-03</div>
<div class="a" style="left:585px;top:502px;width:104px;height:34px;background:#fbfbfb;border:1px solid #d2d2d2;box-sizing:border-box;"></div>
<div class="t" style="left:337.0px;top:508.96px;width:600px;font-size:16px;line-height:21px;color:#444;text-align:center;">OK</div>
<div class="a" style="left:696px;top:502px;width:104px;height:34px;background:#fbfbfb;border:1px solid #d2d2d2;box-sizing:border-box;"></div>
<div class="t" style="left:448.5px;top:508.96px;width:600px;font-size:16px;line-height:21px;color:#444;text-align:center;">Cancel</div>
<svg class="a" style="left:350px;top:340px;" width="480" height="215" viewBox="0 0 480 215"><rect x="14" y="12.8" width="452" height="190.7" fill="none" stroke="#f01018" stroke-width="2.1" stroke-dasharray="6 2.2"/></svg>
<svg class="a" style="left:340px;top:327px;" width="44" height="44" viewBox="0 0 44 44"><circle cx="21.3" cy="21.5" r="17.6" fill="#7ba3d3" stroke="#151515" stroke-width="1.4"/></svg>
<div class="t" style="left:61.5px;top:336.92px;width:600px;font-size:19px;line-height:25px;color:#ffffff;text-align:center;font-weight:bold;">2</div>
<div class="a" style="left:651px;top:544px;width:438px;height:120px;background:#6f97c9;border:1px solid #000;box-sizing:border-box;"></div>
<div class="t" style="left:666.5px;top:562.36px;width:600px;font-size:23.5px;line-height:31px;color:#111;text-align:left;letter-spacing:1.28px;">A window pops up to name the</div>
<div class="t" style="left:666.5px;top:589.86px;width:600px;font-size:23.5px;line-height:31px;color:#111;text-align:left;letter-spacing:1.18px;">milestone sheet.</div>
<div class="t" style="left:666.5px;top:617.36px;width:600px;font-size:23.5px;line-height:31px;color:#111;text-align:left;letter-spacing:1.14px;">Input the name and click `OK’.</div>
</body></html>
